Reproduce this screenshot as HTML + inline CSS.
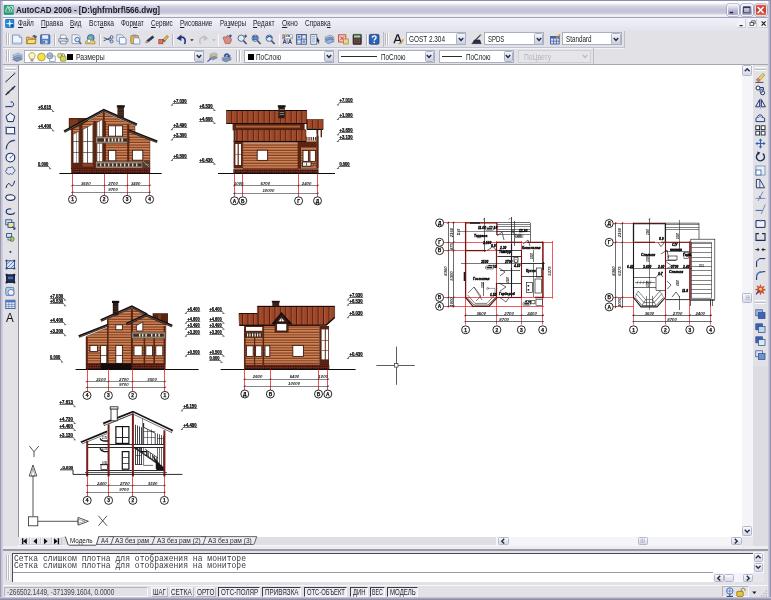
<!DOCTYPE html>
<html lang="ru"><head><meta charset="utf-8"><title>AutoCAD 2006</title>
<style>
html,body{margin:0;padding:0;background:#fff;}
#r{position:relative;width:771px;height:600px;overflow:hidden;will-change:transform;font-family:"Liberation Sans",sans-serif;}
#r div{position:absolute;box-sizing:border-box;}
#r svg{position:absolute;overflow:visible;}
.t{position:absolute;white-space:nowrap;transform-origin:0 50%;font-family:"Liberation Sans",sans-serif;}
.cb{background:#fff;border:1px solid #a9b0c4;}
.dd{background:linear-gradient(#f4f5fa,#c9cde0);border:1px solid #aab0c8;border-radius:1.5px;}
.sb{background:linear-gradient(#fafafd,#d6d8e6);border:1px solid #b4b8cc;border-radius:1.5px;}
#bg{position:absolute;left:0;top:0;width:771px;height:600px;background:#e0e0e5;}
</style></head><body><div id="bg"></div><div id="r">
<div style="left:0px;top:0px;width:771px;height:18px;background:linear-gradient(#8e8eac 0,#8e8eac 0.8px,#fdfdff 1.2px,#fbfbfe 3px,#d4d4e4 6px,#c3c3d8 10px,#c6c6da 13px,#ececf4 15px,#fbfbfe 16.4px,#a2a2ba 17px,#a2a2ba 18px);"></div>
<div style="left:0px;top:18px;width:771px;height:12.5px;background:linear-gradient(#f1f1f7,#e3e3ed);"></div>
<div style="left:0px;top:30.5px;width:771px;height:34px;background:#e1e1e6;"></div>
<div style="left:0px;top:63.6px;width:771px;height:1.2px;background:#a7a7b2;"></div>
<div style="left:0px;top:1px;width:3px;height:599px;background:linear-gradient(90deg,#9a9ab4 0,#9a9ab4 0.9px,#c2c2d6 1.3px,#d2d2e0 3px);"></div>
<div style="left:768px;top:1px;width:3px;height:599px;background:linear-gradient(90deg,#d2d2e0 0,#b4b4cc 1.6px,#8f8fa9 2.2px,#8f8fa9 3px);"></div>
<div style="left:0px;top:597.2px;width:771px;height:2.8px;background:linear-gradient(#d0d0de 0,#b4b4cc 1.2px,#8c8ca6 2px,#8c8ca6 3px);"></div>
<svg style="left:4px;top:4.6px" width="9.6" height="9.6" viewBox="0 0 10 10"><rect width="10" height="10" fill="#2f9e78"/><path d="M1 7.5h8M1.5 6.5L4 1.2L6 6.5M5 1.5l3.5 5M6.5 1.5h2.3v3" stroke="#d9f5e8" stroke-width="0.9" fill="none"/><rect x="0" y="7.8" width="10" height="2.2" fill="#27906c"/></svg>
<span class="t" style="left:16.2px;top:5.03px;font-size:9.3px;line-height:10.70px;color:#1a1a24;font-weight:bold;transform:scaleX(0.8629);">AutoCAD 2006 - [D:\ghfrnbrf\566.dwg]</span>
<div style="left:727.4px;top:3.6px;width:11.8px;height:12px;background:linear-gradient(#f2f2fa,#b9b9d2 55%,#a6a6c6);border:0.8px solid #f4f4fb;border-radius:2px;box-shadow:0 0 0 0.5px #8d8db0;"></div>
<div style="left:741.3px;top:3.6px;width:11.8px;height:12px;background:linear-gradient(#f2f2fa,#b9b9d2 55%,#a6a6c6);border:0.8px solid #f4f4fb;border-radius:2px;box-shadow:0 0 0 0.5px #8d8db0;"></div>
<div style="left:755.2px;top:3.6px;width:11.8px;height:12px;background:linear-gradient(#d9594b,#c8392d 55%,#d86a5c);border:0.8px solid #f6d9d6;border-radius:2px;box-shadow:0 0 0 0.5px #8d8db0;"></div>
<svg style="left:727.4px;top:3.6px" width="40" height="12" viewBox="0 0 40 12"><rect x="2.6" y="7.8" width="3.6" height="1.5" fill="#202848"/><rect x="16.6" y="3" width="6.4" height="5.8" fill="none" stroke="#303858" stroke-width="0.9"/><rect x="16.2" y="2.6" width="7.2" height="1.5" fill="#303858"/><path d="M30.6 3l6 6M36.6 3l-6 6" stroke="#fff" stroke-width="1.6"/></svg>
<svg style="left:5.4px;top:19.4px" width="9.4" height="9" viewBox="0 0 10 10"><rect width="10" height="10" rx="1.6" fill="#1f6fb4"/><rect x="0.6" y="0.6" width="8.8" height="8.8" rx="1.2" fill="#2a86cf"/><path d="M5 1.2v7.6M1.2 5h7.6" stroke="#bfe9ff" stroke-width="1.1"/><circle cx="5" cy="5" r="1.5" fill="#eaffff"/><rect x="6.5" y="6.3" width="2.3" height="2.3" fill="#0d4a86"/></svg>
<span class="t" style="left:18.2px;top:19.01px;font-size:8.4px;line-height:9.66px;color:#24242e;transform:scaleX(0.7651);"><u>Ф</u>айл</span>
<span class="t" style="left:40.9px;top:19.01px;font-size:8.4px;line-height:9.66px;color:#24242e;transform:scaleX(0.7789);"><u>П</u>равка</span>
<span class="t" style="left:70px;top:19.01px;font-size:8.4px;line-height:9.66px;color:#24242e;transform:scaleX(0.7436);"><u>В</u>ид</span>
<span class="t" style="left:88.7px;top:19.01px;font-size:8.4px;line-height:9.66px;color:#24242e;transform:scaleX(0.8008);">Вст<u>а</u>вка</span>
<span class="t" style="left:121px;top:19.01px;font-size:8.4px;line-height:9.66px;color:#24242e;transform:scaleX(0.7642);">Фор<u>м</u>ат</span>
<span class="t" style="left:151px;top:19.01px;font-size:8.4px;line-height:9.66px;color:#24242e;transform:scaleX(0.7579);"><u>С</u>ервис</span>
<span class="t" style="left:179.8px;top:19.01px;font-size:8.4px;line-height:9.66px;color:#24242e;transform:scaleX(0.7683);"><u>Р</u>исование</span>
<span class="t" style="left:219.7px;top:19.01px;font-size:8.4px;line-height:9.66px;color:#24242e;transform:scaleX(0.7506);">Ра<u>з</u>меры</span>
<span class="t" style="left:252.9px;top:19.01px;font-size:8.4px;line-height:9.66px;color:#24242e;transform:scaleX(0.8064);"><u>Р</u>едакт</span>
<span class="t" style="left:282.3px;top:19.01px;font-size:8.4px;line-height:9.66px;color:#24242e;transform:scaleX(0.8044);"><u>О</u>кно</span>
<span class="t" style="left:305.4px;top:19.01px;font-size:8.4px;line-height:9.66px;color:#24242e;transform:scaleX(0.7769);">Справк<u>а</u></span>
<div style="left:737px;top:18.6px;width:9px;height:9px;background:#f3f3f7;border-right:0.6px solid #d0d0dc;border-bottom:0.6px solid #d0d0dc;"></div>
<div style="left:748px;top:18.6px;width:9px;height:9px;background:#f3f3f7;border-right:0.6px solid #d0d0dc;border-bottom:0.6px solid #d0d0dc;"></div>
<div style="left:759px;top:18.6px;width:9px;height:9px;background:#f3f3f7;border-right:0.6px solid #d0d0dc;border-bottom:0.6px solid #d0d0dc;"></div>
<svg style="left:737px;top:18.6px" width="32" height="9" viewBox="0 0 32 9"><rect x="2.6" y="6" width="3" height="1.2" fill="#222"/><rect x="13" y="3.4" width="3.6" height="3" fill="none" stroke="#444" stroke-width="0.8"/><path d="M14.6 3.2v-1.4h3.6v3h-1.4" fill="none" stroke="#444" stroke-width="0.8"/><path d="M24.6 2.4l4 4.2M28.6 2.4l-4 4.2" stroke="#222" stroke-width="1.2"/></svg>
<div style="left:3px;top:46.6px;width:621px;height:0.9px;background:#c3c3cf;"></div>
<div style="left:3px;top:47.5px;width:621px;height:0.8px;background:#f4f4f8;"></div>
<div style="left:6.2px;top:33px;width:0.9px;height:12.4px;background:#b9b9c6;"></div>
<div style="left:7.1000000000000005px;top:33px;width:0.7px;height:12.4px;background:#fbfbfd;"></div>
<div style="left:8.4px;top:33px;width:0.9px;height:12.4px;background:#b9b9c6;"></div>
<div style="left:9.3px;top:33px;width:0.7px;height:12.4px;background:#fbfbfd;"></div>
<div style="left:385.2px;top:33px;width:0.9px;height:12.4px;background:#b9b9c6;"></div>
<div style="left:386.09999999999997px;top:33px;width:0.7px;height:12.4px;background:#fbfbfd;"></div>
<div style="left:387.4px;top:33px;width:0.9px;height:12.4px;background:#b9b9c6;"></div>
<div style="left:388.3px;top:33px;width:0.7px;height:12.4px;background:#fbfbfd;"></div>
<div style="left:6.2px;top:50px;width:0.9px;height:12.4px;background:#b9b9c6;"></div>
<div style="left:7.1000000000000005px;top:50px;width:0.7px;height:12.4px;background:#fbfbfd;"></div>
<div style="left:8.4px;top:50px;width:0.9px;height:12.4px;background:#b9b9c6;"></div>
<div style="left:9.3px;top:50px;width:0.7px;height:12.4px;background:#fbfbfd;"></div>
<div style="left:236.4px;top:50px;width:0.9px;height:12.4px;background:#b9b9c6;"></div>
<div style="left:237.3px;top:50px;width:0.7px;height:12.4px;background:#fbfbfd;"></div>
<div style="left:238.6px;top:50px;width:0.9px;height:12.4px;background:#b9b9c6;"></div>
<div style="left:239.5px;top:50px;width:0.7px;height:12.4px;background:#fbfbfd;"></div>
<div style="left:383.2px;top:32px;width:1px;height:14.6px;background:#bdbdca;"></div>
<div style="left:624px;top:31px;width:1px;height:16.6px;background:#bdbdca;"></div>
<div style="left:592.6px;top:48px;width:1px;height:15.6px;background:#bdbdca;"></div>
<div style="left:54px;top:33.5px;width:0.8px;height:12px;background:#b6b6c4;"></div>
<div style="left:54.8px;top:33.5px;width:0.7px;height:12px;background:#f8f8fb;"></div>
<div style="left:99px;top:33.5px;width:0.8px;height:12px;background:#b6b6c4;"></div>
<div style="left:99.8px;top:33.5px;width:0.7px;height:12px;background:#f8f8fb;"></div>
<div style="left:171.8px;top:33.5px;width:0.8px;height:12px;background:#b6b6c4;"></div>
<div style="left:172.60000000000002px;top:33.5px;width:0.7px;height:12px;background:#f8f8fb;"></div>
<div style="left:217.5px;top:33.5px;width:0.8px;height:12px;background:#b6b6c4;"></div>
<div style="left:218.3px;top:33.5px;width:0.7px;height:12px;background:#f8f8fb;"></div>
<div style="left:278.5px;top:33.5px;width:0.8px;height:12px;background:#b6b6c4;"></div>
<div style="left:279.3px;top:33.5px;width:0.7px;height:12px;background:#f8f8fb;"></div>
<div style="left:366px;top:33.5px;width:0.8px;height:12px;background:#b6b6c4;"></div>
<div style="left:366.8px;top:33.5px;width:0.7px;height:12px;background:#f8f8fb;"></div>
<svg style="left:12px;top:34.2px" width="11" height="11" viewBox="0 0 11 11"><path d="M0.6 1h6.6l2.6 2.4v6.4h-9.2z" fill="#eef4fc" stroke="#6f8fc0" stroke-width="0.9"/><path d="M7.2 1v2.4h2.6" fill="#cfdcf0" stroke="#6f8fc0" stroke-width="0.7"/><path d="M1.6 8.8h7.4" stroke="#b9cbe8" stroke-width="1.2"/></svg>
<svg style="left:26px;top:34.2px" width="11" height="11" viewBox="0 0 11 11"><path d="M0.6 3.2h3l1 1h5v5.4h-9z" fill="#e8c050" stroke="#9a7420" stroke-width="0.8"/><path d="M2.2 5.4h8l-1.6 4.2h-8z" fill="#f6dc7c" stroke="#9a7420" stroke-width="0.7"/><path d="M6.2 2.6c1.2-1.8 3-1.6 3.6-0.2l0.8-0.4-0.6 2-1.8-0.8 0.8-0.3" fill="#3a4a6a" stroke="#3a4a6a" stroke-width="0.5"/></svg>
<svg style="left:39.8px;top:34.2px" width="11" height="11" viewBox="0 0 11 11"><rect x="0.6" y="0.8" width="9.2" height="9" rx="0.6" fill="#4f7fc8" stroke="#2b4f96" stroke-width="0.8"/><rect x="2.2" y="1.2" width="6" height="3.6" fill="#e9eff9"/><rect x="2.8" y="6.4" width="4.8" height="3.2" fill="#c8d4ea"/><rect x="3.4" y="7" width="1.4" height="2.2" fill="#2b4f96"/></svg>
<svg style="left:57.6px;top:34.2px" width="11" height="11" viewBox="0 0 11 11"><path d="M2.6 4.4v-3.4h4l1.6 1.4v2" fill="#fff" stroke="#7486a8" stroke-width="0.8"/><rect x="0.8" y="4.4" width="9.2" height="3.6" rx="0.8" fill="#d4d8e4" stroke="#66708c" stroke-width="0.8"/><path d="M2.6 7.2h5.6v2.6h-5.6z" fill="#f6f6fa" stroke="#66708c" stroke-width="0.7"/><circle cx="8.4" cy="5.6" r="0.6" fill="#3a8a3a"/></svg>
<svg style="left:71px;top:34.2px" width="11" height="11" viewBox="0 0 11 11"><path d="M1 0.8h6l2 1.8v7h-8z" fill="#f4f7fc" stroke="#7890b8" stroke-width="0.8"/><circle cx="6.2" cy="5.6" r="2.3" fill="#cfe4f6" stroke="#47608c" stroke-width="0.9"/><path d="M7.8 7.4l2.4 2.6" stroke="#47608c" stroke-width="1.4"/></svg>
<svg style="left:85px;top:34.2px" width="11" height="11" viewBox="0 0 11 11"><circle cx="5.8" cy="4" r="3.4" fill="#5aa0dc" stroke="#2a5c9c" stroke-width="0.8"/><path d="M3.6 3c1-1.4 3-1 3.6 0.2c-0.4 1.4-1.6 1-2 2.4c-1-0.4-1.8-1.4-1.6-2.6" fill="#78c86c"/><path d="M0.6 7.4c2.4-1.8 6.6-1.8 9.4 0v2.4h-9.4z" fill="#f0d26c" stroke="#9c7c24" stroke-width="0.7"/><rect x="2.4" y="5.6" width="3.2" height="3" fill="#fff" stroke="#8090b0" stroke-width="0.6"/></svg>
<svg style="left:103px;top:34.2px" width="11" height="11" viewBox="0 0 11 11"><path d="M0.6 3.6l7.6 3M0.6 6.8l7.4-3.2" stroke="#4a5a7c" stroke-width="1"/><circle cx="8.6" cy="3.2" r="1.5" fill="none" stroke="#3c5a9c" stroke-width="0.9"/><circle cx="8.6" cy="7.4" r="1.5" fill="none" stroke="#3c5a9c" stroke-width="0.9"/></svg>
<svg style="left:116px;top:34.2px" width="11" height="11" viewBox="0 0 11 11"><path d="M0.8 0.8h5l1.6 1.4v5h-6.6z" fill="#eef3fb" stroke="#6f8fc0" stroke-width="0.8"/><path d="M3.4 3.4h5l1.6 1.4v5.2h-6.6z" fill="#f8fafe" stroke="#5f7fb4" stroke-width="0.8"/></svg>
<svg style="left:130.4px;top:34.2px" width="11" height="11" viewBox="0 0 11 11"><rect x="0.8" y="1.6" width="7.6" height="8" rx="0.8" fill="#e8b84c" stroke="#9a7020" stroke-width="0.8"/><rect x="2.8" y="0.6" width="3.6" height="2" fill="#8a94aa"/><path d="M3.6 3.8h4.4l1.8 1.6v4.6h-6.2z" fill="#f4f8fe" stroke="#6f8fc0" stroke-width="0.8"/></svg>
<svg style="left:145px;top:34.2px" width="11" height="11" viewBox="0 0 11 11"><path d="M0.8 8.8l1-2.4l5.8-4.6l1.4 1.6l-5.8 4.6z" fill="#2c3450" stroke="#1c2238" stroke-width="0.5"/><path d="M0.8 8.8l1-2.4l1.4 1.6z" fill="#e8c88c"/></svg>
<svg style="left:157.6px;top:34.2px" width="11" height="11" viewBox="0 0 11 11"><rect x="0.8" y="5.6" width="4" height="4.2" fill="#e46c5c" stroke="#a43c30" stroke-width="0.7"/><path d="M4 7l4.8-5.6l1.6 1.2l-4.4 5.8z" fill="#f0c040" stroke="#8a6818" stroke-width="0.7"/><path d="M4.6 5.6l2.4 1.8" stroke="#3858a8" stroke-width="1.3"/></svg>
<svg style="left:175.6px;top:34.2px" width="11" height="11" viewBox="0 0 11 11"><path d="M8.600 10c1.600-3.600 0.600-7.400-4.400-6.800" fill="none" stroke="#1c3480" stroke-width="1.700"/><path d="M0.600 4.600l4.800-4v6.400z" fill="#1c3480"/></svg>
<svg style="left:190.4px;top:38.6px" width="4" height="3"><path d="M0.200 0.200h3.400l-1.700 2z" fill="#222"/></svg>
<svg style="left:197.6px;top:34.2px" width="11" height="11" viewBox="0 0 11 11"><path d="M2.400 10c-1.600-3.600-0.600-7.400 4.400-6.800" fill="none" stroke="#c0c2ce" stroke-width="1.700"/><path d="M10.400 4.600l-4.800-4v6.400z" fill="#c0c2ce"/></svg>
<svg style="left:212.4px;top:38.6px" width="4" height="3"><path d="M0.200 0.200h3.400l-1.700 2z" fill="#b4b4c0"/></svg>
<svg style="left:221.6px;top:34.2px" width="11" height="11" viewBox="0 0 11 11"><path d="M1 3.6c1.4-1.6 2.4-0.8 3.2 0.2l0.6-2c1-0.6 1.8 0 2 1c1-0.2 1.6 0.4 1.6 1.4c1 0.2 1.4 1 1 2.2l-1.4 3.2h-4.6z" fill="#d88c84" stroke="#a0544c" stroke-width="0.7"/><path d="M8.4 0.4v3M6.9 1.9h3" stroke="#2c54b0" stroke-width="1.1"/></svg>
<svg style="left:236.6px;top:34.2px" width="11" height="11" viewBox="0 0 11 11"><circle cx="4.2" cy="4.2" r="3.2" fill="#dcecf8" stroke="#5a6e94" stroke-width="1"/><path d="M6.4 6.6l3.2 3.4" stroke="#4a5470" stroke-width="1.6"/><path d="M8.6 0.6v3M7.1 2.1h3" stroke="#3a3a4a" stroke-width="0.9"/></svg>
<svg style="left:250.6px;top:34.2px" width="11" height="11" viewBox="0 0 11 11"><circle cx="4.2" cy="4.2" r="3.2" fill="#dcecf8" stroke="#5a6e94" stroke-width="1"/><path d="M6.4 6.6l3.2 3.4" stroke="#4a5470" stroke-width="1.6"/><rect x="2.2" y="2.4" width="4" height="3.4" fill="#5a8ad0" stroke="#2c4c90" stroke-width="0.6"/></svg>
<svg style="left:264.6px;top:34.2px" width="11" height="11" viewBox="0 0 11 11"><circle cx="4.2" cy="4.2" r="3.2" fill="#dcecf8" stroke="#5a6e94" stroke-width="1"/><path d="M6.4 6.6l3.2 3.4" stroke="#4a5470" stroke-width="1.6"/><path d="M1.8 4.2c1-2.4 4-2.4 5 0" fill="none" stroke="#2c54b0" stroke-width="1.1"/></svg>
<svg style="left:282px;top:34.2px" width="11" height="11" viewBox="0 0 11 11"><rect x="0.6" y="0.8" width="9.6" height="4" fill="#fff" stroke="#7080a0" stroke-width="0.6"/><rect x="1.2" y="1.2" width="2" height="1.6" fill="#e03030"/><rect x="3.6" y="1.2" width="2" height="1.6" fill="#30a030"/><rect x="6" y="1.2" width="2" height="1.6" fill="#3050e0"/><rect x="8" y="2.8" width="2" height="1.6" fill="#e0c020"/><rect x="1.2" y="3" width="2" height="1.4" fill="#c030c0"/><path d="M1 9.8l1.6-4.4l1.6 4.4M6.4 9.8l1.6-4.4l1.6 4.4M1.6 8.4h2M7 8.4h2" stroke="#283a6c" stroke-width="0.9" fill="none"/><path d="M5.2 4.8v5" stroke="#7080a0" stroke-width="0.8"/></svg>
<svg style="left:296px;top:34.2px" width="11" height="11" viewBox="0 0 11 11"><rect x="0.6" y="0.6" width="9.8" height="9.6" fill="#dfe8f6" stroke="#3c5488" stroke-width="0.9"/><path d="M5.4 0.6v9.6M0.6 5.2h9.8" stroke="#3c5488" stroke-width="0.8"/><rect x="1.6" y="1.6" width="2.6" height="2.4" fill="#6a8ac8"/><rect x="6.6" y="1.6" width="2.6" height="2.4" fill="#fff" stroke="#6a8ac8" stroke-width="0.5"/><rect x="1.6" y="6.4" width="2.6" height="2.4" fill="#fff" stroke="#6a8ac8" stroke-width="0.5"/><rect x="6.6" y="6.4" width="2.6" height="2.4" fill="#6a8ac8"/></svg>
<svg style="left:310px;top:34.2px" width="11" height="11" viewBox="0 0 11 11"><rect x="0.8" y="0.6" width="6" height="9.6" fill="#f2f5fb" stroke="#4a648c" stroke-width="0.8"/><path d="M2 2.4h3.4M2 4.2h3.4M2 6h3.4M2 7.8h3.4" stroke="#7088b4" stroke-width="0.7"/><path d="M7 3l2.6 4l-1 0.2l0.8 2l-0.8 0.4l-0.8-2l-0.8 0.6z" fill="#222c44"/></svg>
<svg style="left:324px;top:34.2px" width="11" height="11" viewBox="0 0 11 11"><path d="M0.8 3.2l6-2.2l3.4 2.4l-6 2.4z" fill="#b4c8e4" stroke="#6f86ac" stroke-width="0.6"/><path d="M0.8 5.2l6-2.2l3.4 2.4l-6 2.4z" fill="#7c9ccc" stroke="#4f6a98" stroke-width="0.6"/><path d="M0.8 7.2l6-2.2l3.4 2.4l-6 2.4z" fill="#9cb8dc" stroke="#4f6a98" stroke-width="0.6"/></svg>
<svg style="left:338px;top:34.2px" width="11" height="11" viewBox="0 0 11 11"><rect x="0.6" y="0.8" width="7.2" height="7.2" fill="#f4d0cc" stroke="#c04438" stroke-width="0.9"/><path d="M2 2.4l4 4M6 2.4l-4 4" stroke="#c83c30" stroke-width="1"/><rect x="5.4" y="5" width="4.8" height="5" fill="#f0d48c" stroke="#a08030" stroke-width="0.7"/></svg>
<svg style="left:351.6px;top:34.2px" width="11" height="11" viewBox="0 0 11 11"><rect x="1" y="0.4" width="8.4" height="10" rx="0.6" fill="#3a3a3e" stroke="#1c1c20" stroke-width="0.6"/><rect x="2" y="1.4" width="6.4" height="2.2" fill="#9cd48c"/><path d="M2 5.2h6.4M2 6.8h6.4M2 8.4h6.4" stroke="#c84840" stroke-width="0.9" stroke-dasharray="1.4 0.9"/></svg>
<svg style="left:369.4px;top:34.2px" width="11" height="11" viewBox="0 0 11 11"><rect x="0.4" y="0.4" width="9.6" height="9.8" rx="1.2" fill="#2c64b8" stroke="#163c80" stroke-width="0.8"/><path d="M3.4 3.8c0-2.6 3.8-2.4 3.6-0.2c-0.2 1.4-1.8 1.4-1.8 3" stroke="#fff" stroke-width="1.4" fill="none"/><circle cx="5.2" cy="8.4" r="0.8" fill="#fff"/></svg>
<svg style="left:392.8px;top:34.2px" width="11" height="11" viewBox="0 0 11 11"><path d="M1 9.2l3.2-8.2h1l3 8.2M2.2 6.4h4.8" stroke="#181c2c" stroke-width="1.3" fill="none"/><path d="M5.4 9.6c2-0.2 3.6-1.6 4.8-4.4" stroke="#c89030" stroke-width="1.4" fill="none"/></svg>
<div class="cb" style="left:405.8px;top:32.2px;width:60.6px;height:13.2px;"></div>
<div class="dd" style="left:456.0px;top:33.0px;width:9.6px;height:11.6px;"></div>
<svg style="left:457.80px;top:36.60px" width="6" height="5" viewBox="0 0 6 5"><path d="M0.8 1l2.2 2.4l2.2-2.4" fill="none" stroke="#262c40" stroke-width="1.5"/></svg>
<span class="t" style="left:409px;top:35.03px;font-size:8.6px;line-height:9.89px;color:#1c1c24;transform:scaleX(0.7481);">GOST 2.304</span>
<svg style="left:471px;top:34.2px" width="11" height="11" viewBox="0 0 11 11"><path d="M0.6 9.6h10M1.4 9.4l2-3.4h5.4l1 3.4" fill="#2c3040" stroke="#1c2030" stroke-width="0.7"/><path d="M4.4 6.2l5.4-5.6" stroke="#2c3040" stroke-width="1.1"/><path d="M8.6 0.8l1.6 1.2" stroke="#c89030" stroke-width="1.2"/></svg>
<div class="cb" style="left:484.2px;top:32.2px;width:60px;height:13.2px;"></div>
<div class="dd" style="left:533.8000000000001px;top:33.0px;width:9.6px;height:11.6px;"></div>
<svg style="left:535.60px;top:36.60px" width="6" height="5" viewBox="0 0 6 5"><path d="M0.8 1l2.2 2.4l2.2-2.4" fill="none" stroke="#262c40" stroke-width="1.5"/></svg>
<span class="t" style="left:487.6px;top:35.03px;font-size:8.6px;line-height:9.89px;color:#1c1c24;transform:scaleX(0.7002);">SPDS</span>
<svg style="left:549.6px;top:34.2px" width="11" height="11" viewBox="0 0 11 11"><rect x="0.6" y="2.4" width="8.6" height="7.6" fill="#dfe8f8" stroke="#2c4c90" stroke-width="0.8"/><rect x="0.6" y="2.4" width="8.6" height="2.2" fill="#3c64b4"/><path d="M0.6 7.2h8.6M3.6 4.6v5.4M6.4 4.6v5.4" stroke="#2c4c90" stroke-width="0.7"/><path d="M5.6 5l4.4-4.6" stroke="#c89030" stroke-width="1.3"/></svg>
<div class="cb" style="left:562.2px;top:32.2px;width:59.4px;height:13.2px;"></div>
<div class="dd" style="left:611.2px;top:33.0px;width:9.6px;height:11.6px;"></div>
<svg style="left:613.00px;top:36.60px" width="6" height="5" viewBox="0 0 6 5"><path d="M0.8 1l2.2 2.4l2.2-2.4" fill="none" stroke="#262c40" stroke-width="1.5"/></svg>
<span class="t" style="left:565.6px;top:35.03px;font-size:8.6px;line-height:9.89px;color:#1c1c24;transform:scaleX(0.7335);">Standard</span>
<svg style="left:11.8px;top:52px" width="11" height="11" viewBox="0 0 11 11"><path d="M0.6 3.4l5.4-2.4l4.4 2l-5.4 2.6z" fill="#c4d0e4" stroke="#7c8cac" stroke-width="0.6"/><path d="M0.6 5.4l5.4-2.4l4.4 2l-5.4 2.6z" fill="#9cb0d0" stroke="#6878a0" stroke-width="0.6"/><path d="M0.6 7.4l5.4-2.4l4.4 2l-5.4 2.6z" fill="#7c94bc" stroke="#586890" stroke-width="0.6"/></svg>
<div class="cb" style="left:24px;top:50px;width:180.4px;height:13.2px;"></div>
<div class="dd" style="left:194.0px;top:50.8px;width:9.6px;height:11.6px;"></div>
<svg style="left:195.80px;top:54.40px" width="6" height="5" viewBox="0 0 6 5"><path d="M0.8 1l2.2 2.4l2.2-2.4" fill="none" stroke="#262c40" stroke-width="1.5"/></svg>
<svg style="left:27.6px;top:52px" width="8" height="10" viewBox="0 0 8 10"><path d="M4 0.6c2.2 0 3.2 1.6 3.2 3c0 1.4-1.2 2-1.4 3.4h-3.6c-0.2-1.4-1.4-2-1.4-3.4c0-1.4 1-3 3.2-3z" fill="#fbf6b8" stroke="#8c8450" stroke-width="0.7"/><rect x="2.6" y="7.2" width="2.8" height="2.2" fill="#8c93a8"/></svg>
<svg style="left:36.6px;top:52px" width="9" height="10" viewBox="0 0 9 10"><circle cx="4.4" cy="5" r="3.9" fill="#f2e04c" stroke="#a4942c" stroke-width="0.8"/></svg>
<svg style="left:46px;top:51.6px" width="10" height="10" viewBox="0 0 10 10"><rect x="3.6" y="4" width="5.6" height="5.4" fill="#fff" stroke="#7c8cb0" stroke-width="0.7"/><circle cx="3.8" cy="3.8" r="3.1" fill="#9cacbc" stroke="#6c7c94" stroke-width="0.7"/><path d="M1.8 2.6c1.2-1 2.6-1 3.8 0M1.8 5c1.2 1 2.6 1 3.8 0" stroke="#d8e4ec" stroke-width="0.6" fill="none"/></svg>
<svg style="left:56.8px;top:51.6px" width="10" height="10" viewBox="0 0 10 10"><circle cx="3" cy="3.6" r="2.4" fill="#e8e06c" stroke="#7c8430" stroke-width="0.7"/><rect x="3.4" y="4.2" width="5.6" height="5" rx="0.8" fill="#d8d44c" stroke="#7c8430" stroke-width="0.7"/><path d="M4.6 4.2v-1.2c0-1.8 3-1.8 3 0v1.2" fill="none" stroke="#6c7494" stroke-width="0.8"/></svg>
<div style="left:67.2px;top:53.6px;width:6.2px;height:6.8px;background:#000;"></div>
<span class="t" style="left:76.2px;top:53.03px;font-size:8.6px;line-height:9.89px;color:#1c1c24;transform:scaleX(0.8003);">Размеры</span>
<svg style="left:207px;top:52px" width="11" height="11" viewBox="0 0 11 11"><path d="M2.6 2.4l4.4-1.8l3.4 1.6l-4.4 2z" fill="#c4d0e4" stroke="#7c8cac" stroke-width="0.5"/><path d="M2.6 4.2l4.4-1.8l3.4 1.6l-4.4 2z" fill="#e8d060" stroke="#a48c2c" stroke-width="0.5"/><path d="M2.6 6l4.4-1.8l3.4 1.6l-4.4 2z" fill="#7c94bc" stroke="#586890" stroke-width="0.5"/><path d="M0.4 9.6l3.2-2.8" stroke="#2c54b0" stroke-width="1.1"/><path d="M2.4 6.4l1.6 0l0 1.6z" fill="#2c54b0"/></svg>
<svg style="left:221px;top:52px" width="11" height="11" viewBox="0 0 11 11"><path d="M0.8 6.2l5.4-2.2l4.2 1.8l-5.4 2.4z" fill="#9cb0d0" stroke="#586890" stroke-width="0.5"/><path d="M0.8 8l5.4-2.2l4.2 1.8l-5.4 2.4z" fill="#7c94bc" stroke="#586890" stroke-width="0.5"/><path d="M3 4.4c0-3.6 5-4 5.4-0.6l1-0.2l-1.4 2l-1.6-1.6l1 0c-0.4-2-3-1.6-3 0.6z" fill="#24448c" stroke="#24448c" stroke-width="0.4"/></svg>
<div class="cb" style="left:244px;top:50px;width:90.4px;height:13.2px;"></div>
<div class="dd" style="left:323.99999999999994px;top:50.8px;width:9.6px;height:11.6px;"></div>
<svg style="left:325.80px;top:54.40px" width="6" height="5" viewBox="0 0 6 5"><path d="M0.8 1l2.2 2.4l2.2-2.4" fill="none" stroke="#262c40" stroke-width="1.5"/></svg>
<div style="left:247.8px;top:53.6px;width:5.8px;height:6.2px;background:#000;"></div>
<span class="t" style="left:256.2px;top:53.03px;font-size:8.6px;line-height:9.89px;color:#1c1c24;transform:scaleX(0.7458);">ПоСлою</span>
<div class="cb" style="left:338px;top:50px;width:97px;height:13.2px;"></div>
<div class="dd" style="left:424.59999999999997px;top:50.8px;width:9.6px;height:11.6px;"></div>
<svg style="left:426.40px;top:54.40px" width="6" height="5" viewBox="0 0 6 5"><path d="M0.8 1l2.2 2.4l2.2-2.4" fill="none" stroke="#262c40" stroke-width="1.5"/></svg>
<div style="left:341.4px;top:56.2px;width:35.6px;height:0.9px;background:#2a2a30;"></div>
<span class="t" style="left:381px;top:53.03px;font-size:8.6px;line-height:9.89px;color:#1c1c24;transform:scaleX(0.7339);">ПоСлою</span>
<div class="cb" style="left:439px;top:50px;width:75px;height:13.2px;"></div>
<div class="dd" style="left:503.59999999999997px;top:50.8px;width:9.6px;height:11.6px;"></div>
<svg style="left:505.40px;top:54.40px" width="6" height="5" viewBox="0 0 6 5"><path d="M0.8 1l2.2 2.4l2.2-2.4" fill="none" stroke="#262c40" stroke-width="1.5"/></svg>
<div style="left:442.2px;top:56.2px;width:20px;height:0.9px;background:#2a2a30;"></div>
<span class="t" style="left:466px;top:53.03px;font-size:8.6px;line-height:9.89px;color:#1c1c24;transform:scaleX(0.7339);">ПоСлою</span>
<div class="cb" style="left:518.4px;top:50px;width:72.4px;height:13.2px;background:#e6e6ea;border-color:#cfcfd8;"></div>
<svg style="left:582.20px;top:54.40px" width="6" height="5" viewBox="0 0 6 5"><path d="M0.8 1l2.2 2.4l2.2-2.4" fill="none" stroke="#bcbcc8" stroke-width="1.5"/></svg>
<span class="t" style="left:524px;top:53.03px;font-size:8.6px;line-height:9.89px;color:#b4b4c0;transform:scaleX(0.7797);">ПоЦвету</span>
<div style="left:18.4px;top:64.8px;width:723.2px;height:472px;background:#fff;"></div>
<div style="left:17.6px;top:64.6px;width:0.9px;height:481px;background:#8e8e9c;"></div>
<div style="left:3px;top:64.8px;width:14.6px;height:484px;background:#e1e1e6;"></div>
<div style="left:5px;top:66.6px;width:11px;height:0.8px;background:#bcbcc8;"></div>
<div style="left:5px;top:67.4px;width:11px;height:0.7px;background:#fbfbfd;"></div>
<div style="left:5px;top:68.8px;width:11px;height:0.8px;background:#bcbcc8;"></div>
<div style="left:5px;top:69.6px;width:11px;height:0.7px;background:#fbfbfd;"></div>
<svg style="left:4.6px;top:71.6px" width="11" height="11" viewBox="0 0 11 11"><path d="M1 9.6l8.6-8" stroke="#1c2030" stroke-width="1"/><rect x="0.4" y="8.8" width="1.6" height="1.6" fill="#4a7cc8"/><rect x="8.8" y="0.6" width="1.6" height="1.6" fill="#4a7cc8"/></svg>
<svg style="left:4.6px;top:85.0px" width="11" height="11" viewBox="0 0 11 11"><path d="M0.6 10l9.6-9" stroke="#1c2030" stroke-width="1.1"/><rect x="2.4" y="6.6" width="1.8" height="1.8" fill="#1c2c5c"/><rect x="6.8" y="2.6" width="1.8" height="1.8" fill="#1c2c5c"/></svg>
<svg style="left:4.6px;top:98.39999999999999px" width="11" height="11" viewBox="0 0 11 11"><path d="M1 8.6h5.4c3 0 3-4.6 0-4.6" stroke="#1c2c5c" stroke-width="1" fill="none"/><rect x="0.2" y="7.8" width="1.6" height="1.6" fill="#4a7cc8"/><rect x="5.6" y="3.2" width="1.6" height="1.6" fill="#4a7cc8"/><rect x="5.8" y="7.8" width="1.6" height="1.6" fill="#4a7cc8"/></svg>
<svg style="left:4.6px;top:111.8px" width="11" height="11" viewBox="0 0 11 11"><path d="M5.4 1l4.4 3.2l-1.6 5.4h-5.6l-1.6-5.4z" fill="#eef2fa" stroke="#1c2c5c" stroke-width="1"/></svg>
<svg style="left:4.6px;top:125.19999999999999px" width="11" height="11" viewBox="0 0 11 11"><rect x="1.2" y="2.4" width="8.4" height="6.4" fill="#f2f5fb" stroke="#1c2c5c" stroke-width="1"/><rect x="0.4" y="1.6" width="1.6" height="1.6" fill="#4a7cc8"/><rect x="8.8" y="8" width="1.6" height="1.6" fill="#4a7cc8"/></svg>
<svg style="left:4.6px;top:138.6px" width="11" height="11" viewBox="0 0 11 11"><path d="M1.4 9.8c0-4.6 3-8 8-8.4" stroke="#1c2c5c" stroke-width="1.1" fill="none"/><rect x="0.6" y="8.8" width="1.6" height="1.6" fill="#4a7cc8"/><rect x="8.6" y="0.6" width="1.6" height="1.6" fill="#4a7cc8"/></svg>
<svg style="left:4.6px;top:152.0px" width="11" height="11" viewBox="0 0 11 11"><circle cx="5.4" cy="5.6" r="4.4" fill="#f2f5fb" stroke="#1c2c5c" stroke-width="1.1"/><path d="M5.4 5.6l3-3" stroke="#4a7cc8" stroke-width="0.9"/><circle cx="5.4" cy="5.6" r="0.9" fill="#4a7cc8"/></svg>
<svg style="left:4.6px;top:165.39999999999998px" width="11" height="11" viewBox="0 0 11 11"><path d="M2 8c-2-0.6-1.6-3 0-3.2c-0.6-2 1.6-3.2 3-2c1-1.6 3.8-1 3.6 1c1.8 0.4 1.8 3 0 3.4c0.2 1.8-2 2.6-3.2 1.4c-1 1.2-3 0.8-3.400-0.600z" fill="#dfe6f4" stroke="#3c4c7c" stroke-width="0.9"/></svg>
<svg style="left:4.6px;top:178.8px" width="11" height="11" viewBox="0 0 11 11"><path d="M1 9c1.200-5 3.200-5.400 4.400-3.200s3 1.400 4.200-4" stroke="#1c2c5c" stroke-width="1" fill="none"/></svg>
<svg style="left:4.6px;top:192.2px" width="11" height="11" viewBox="0 0 11 11"><ellipse cx="5.4" cy="5.6" rx="4.6" ry="2.8" fill="#f2f5fb" stroke="#1c2c5c" stroke-width="1.1"/></svg>
<svg style="left:4.6px;top:205.6px" width="11" height="11" viewBox="0 0 11 11"><path d="M9.800 6.400a4.400 2.800 0 1 1 -4.400 -3.600" fill="none" stroke="#1c2c5c" stroke-width="1.100"/><rect x="4.600" y="2" width="1.600" height="1.600" fill="#4a7cc8"/></svg>
<svg style="left:4.6px;top:219.0px" width="11" height="11" viewBox="0 0 11 11"><rect x="0.800" y="0.800" width="6" height="5" fill="#dfe8f8" stroke="#2c4c8c" stroke-width="0.900"/><rect x="3" y="3.400" width="6" height="5" fill="#f0e48c" stroke="#2c4c8c" stroke-width="0.900"/><path d="M7 7.400l3 2.800M10 8.400v1.800h-1.800" stroke="#1c2c5c" stroke-width="0.900" fill="none"/></svg>
<svg style="left:4.6px;top:232.4px" width="11" height="11" viewBox="0 0 11 11"><rect x="1.600" y="1.600" width="5" height="3.600" fill="#dfe8f8" stroke="#2c4c8c" stroke-width="0.900"/><circle cx="6.800" cy="7" r="2.300" fill="#b8d86c" stroke="#3c6c2c" stroke-width="0.800"/><rect x="3" y="5.400" width="3" height="2.600" fill="#f0e48c" stroke="#2c4c8c" stroke-width="0.700"/></svg>
<svg style="left:4.6px;top:245.8px" width="11" height="11" viewBox="0 0 11 11"><rect x="4.600" y="5" width="1.700" height="1.700" fill="#1c2c5c"/></svg>
<svg style="left:4.6px;top:259.2px" width="11" height="11" viewBox="0 0 11 11"><rect x="1.600" y="1.800" width="7.800" height="7.600" fill="#dfe8f8" stroke="#2c4478" stroke-width="0.900"/><path d="M1.600 5.600l4-3.800M1.600 9.400l7.800-7.600M5.400 9.400l4-3.800" stroke="#3c64b4" stroke-width="0.800"/><rect x="0.600" y="0.800" width="1.800" height="1.800" fill="#2c4478"/><rect x="8.400" y="0.800" width="1.800" height="1.800" fill="#2c4478"/><rect x="0.600" y="8.600" width="1.800" height="1.800" fill="#2c4478"/><rect x="8.400" y="8.600" width="1.800" height="1.800" fill="#2c4478"/></svg>
<svg style="left:4.6px;top:272.6px" width="11" height="11" viewBox="0 0 11 11"><rect x="1.600" y="1.800" width="7.800" height="7.600" fill="#1c2c5c" stroke="#10182c" stroke-width="0.900"/><rect x="3" y="3.600" width="5" height="2.600" fill="#4a6cb0"/><rect x="0.600" y="0.800" width="1.800" height="1.800" fill="#10182c"/><rect x="8.400" y="0.800" width="1.800" height="1.800" fill="#10182c"/><rect x="0.600" y="8.600" width="1.800" height="1.800" fill="#10182c"/><rect x="8.400" y="8.600" width="1.800" height="1.800" fill="#10182c"/></svg>
<svg style="left:4.6px;top:286.0px" width="11" height="11" viewBox="0 0 11 11"><rect x="0.800" y="1.400" width="8" height="8" rx="1" fill="#b8d0ec" stroke="#4a6ca8" stroke-width="0.800"/><circle cx="6" cy="6.400" r="3" fill="#eef4fc" stroke="#4a6ca8" stroke-width="0.800"/></svg>
<svg style="left:4.6px;top:299.4px" width="11" height="11" viewBox="0 0 11 11"><rect x="0.800" y="1.200" width="9.200" height="8.400" fill="#eef3fb" stroke="#2c4c90" stroke-width="0.800"/><rect x="0.800" y="1.200" width="9.200" height="2.200" fill="#4a74c4"/><path d="M0.800 5.400h9.200M0.800 7.400h9.200M3.800 3.400v6.200M6.800 3.400v6.200" stroke="#4a6cb0" stroke-width="0.600"/></svg>
<span class="t" style="left:5.6px;top:311.6px;font-size:12.6px;line-height:13px;color:#101018;transform:scaleX(0.92)">A</span>
<div style="left:741.6px;top:64.8px;width:11.2px;height:472px;background:#f5f5f9;"></div>
<div class="sb" style="left:742.2px;top:65.2px;width:10.2px;height:10.6px;"></div>
<div class="sb" style="left:742.2px;top:525.6px;width:10.2px;height:10.6px;"></div>
<svg style="left:744.10px;top:67.20px" width="6.400" height="6.400" viewBox="0 0 6.400 6.400"><path d="M0.800 4.200l2.400-2.400l2.400 2.400" fill="none" stroke="#2c3248" stroke-width="1.500"/></svg>
<svg style="left:744.10px;top:527.80px" width="6.400" height="6.400" viewBox="0 0 6.400 6.400"><path d="M0.800 1.800l2.400 2.400l2.400-2.400" fill="none" stroke="#2c3248" stroke-width="1.500"/></svg>
<div style="left:752.8px;top:64.8px;width:15.2px;height:301px;background:#e1e1e6;"></div>
<div style="left:752.8px;top:365.8px;width:15.2px;height:183px;background:#dcdce2;"></div>
<div style="left:754.6px;top:66.6px;width:11.4px;height:0.8px;background:#bcbcc8;"></div>
<div style="left:754.6px;top:67.4px;width:11.4px;height:0.7px;background:#fbfbfd;"></div>
<div style="left:754.6px;top:68.8px;width:11.4px;height:0.8px;background:#bcbcc8;"></div>
<div style="left:754.6px;top:69.6px;width:11.4px;height:0.7px;background:#fbfbfd;"></div>
<svg style="left:755.2px;top:71.5px" width="11" height="11" viewBox="0 0 11 11"><path d="M1.400 8l6.400-6.600l2 1.600l-5.800 6.600z" fill="#e8d860" stroke="#8c7c2c" stroke-width="0.600"/><path d="M1.400 8l1.800-1.800l1.800 1.800l-1 1.600z" fill="#e87c8c" stroke="#a4445c" stroke-width="0.500"/><path d="M0.400 10.400h8" stroke="#3c3c4c" stroke-width="0.900"/></svg>
<svg style="left:755.2px;top:85.0px" width="11" height="11" viewBox="0 0 11 11"><circle cx="3" cy="3" r="2" fill="#fff" stroke="#1c2c5c" stroke-width="1"/><circle cx="7.600" cy="7.800" r="2" fill="#fff" stroke="#1c2c5c" stroke-width="1"/><path d="M5 2.600h3.400v2.400" stroke="#1c2c5c" stroke-width="1" fill="none"/><circle cx="6.400" cy="6" r="1.600" fill="#8cacdc" stroke="#1c2c5c" stroke-width="0.600"/></svg>
<svg style="left:755.2px;top:98.1px" width="11" height="11" viewBox="0 0 11 11"><path d="M4.600 1.600v7.200h-4zM6.400 1.600v7.200h4z" fill="#dce6f6" stroke="#1c2c5c" stroke-width="0.900"/><path d="M5.500 0.400v10.400" stroke="#4a7cc8" stroke-width="0.700" stroke-dasharray="1.400 0.800"/></svg>
<svg style="left:755.2px;top:111.5px" width="11" height="11" viewBox="0 0 11 11"><path d="M1 9.600v-3.200c0-0.800 1-0.800 1.600-0.800c-0.600-3.600 5.400-3.600 5 0c1 0 2 0 2 0.800v3.200z" fill="#dce6f6" stroke="#1c2c5c" stroke-width="0.900"/><path d="M3.600 6c0-2 3.200-2 3.200 0" fill="none" stroke="#4a7cc8" stroke-width="0.800"/></svg>
<svg style="left:755.2px;top:124.80000000000001px" width="11" height="11" viewBox="0 0 11 11"><rect x="0.800" y="0.800" width="3.800" height="3.800" fill="#fff" stroke="#1c2030" stroke-width="0.900"/><rect x="6.200" y="0.800" width="3.800" height="3.800" fill="#fff" stroke="#1c2030" stroke-width="0.900"/><rect x="0.800" y="6.200" width="3.800" height="3.800" fill="#fff" stroke="#1c2030" stroke-width="0.900"/><rect x="6.200" y="6.200" width="3.800" height="3.800" fill="#fff" stroke="#1c2030" stroke-width="0.900"/></svg>
<svg style="left:755.2px;top:138.1px" width="11" height="11" viewBox="0 0 11 11"><path d="M5.500 0.400l1.800 2.200h-1.200v2.300h2.300v-1.200l2.200 1.800l-2.200 1.800v-1.200h-2.300v2.300h1.200l-1.800 2.200l-1.800-2.200h1.200v-2.300h-2.300v1.200l-2.200-1.800l2.200-1.800v1.200h2.300v-2.300h-1.200z" fill="#2c5cb4"/></svg>
<svg style="left:755.2px;top:151.3px" width="11" height="11" viewBox="0 0 11 11"><path d="M3.400 2.400a4 4 0 1 0 4.400 0.200" fill="none" stroke="#1c2c5c" stroke-width="1.400"/><path d="M2 0.600l3.400 0.800l-2 2.600z" fill="#1c2c5c"/></svg>
<svg style="left:755.2px;top:164.7px" width="11" height="11" viewBox="0 0 11 11"><rect x="1" y="1" width="9" height="9" fill="#e8eef8" stroke="#7c94c4" stroke-width="0.900"/><rect x="1" y="5" width="5" height="5" fill="#fff" stroke="#4a6cb0" stroke-width="0.900"/></svg>
<svg style="left:755.2px;top:178.1px" width="11" height="11" viewBox="0 0 11 11"><path d="M1.400 9.800v-8.400h3.400l4.800 8.400z" fill="#e4ecf8" stroke="#1c2c5c" stroke-width="0.900"/><path d="M4.800 1.400v8.400" stroke="#1c2c5c" stroke-width="0.700"/></svg>
<svg style="left:755.2px;top:191.1px" width="11" height="11" viewBox="0 0 11 11"><path d="M0.600 7.400h9.600" stroke="#6c84b4" stroke-width="0.900"/><path d="M3 10l5-9.400" stroke="#6c84b4" stroke-width="0.900"/><path d="M4.200 5.200l1.600 2.200" stroke="#1c2c5c" stroke-width="0.800"/></svg>
<svg style="left:755.2px;top:204.3px" width="11" height="11" viewBox="0 0 11 11"><path d="M0.600 6.400h6.200" stroke="#3c5ca4" stroke-width="1"/><path d="M6.200 10l4-9.400" stroke="#6c84b4" stroke-width="0.900"/><path d="M7 6.400h1.600" stroke="#6c84b4" stroke-width="0.800" stroke-dasharray="0.800 0.600"/></svg>
<svg style="left:755.2px;top:217.5px" width="11" height="11" viewBox="0 0 11 11"><path d="M1 2.600h9v6.800h-9z" fill="#eef2fa" stroke="#1c2c5c" stroke-width="1"/><rect x="4.600" y="1.800" width="1.700" height="1.700" fill="#4a7cc8"/></svg>
<svg style="left:755.2px;top:230.7px" width="11" height="11" viewBox="0 0 11 11"><path d="M4 2.600h-3v6.800h9v-6.800h-3" fill="none" stroke="#1c2c5c" stroke-width="1.100"/></svg>
<svg style="left:755.2px;top:244.1px" width="11" height="11" viewBox="0 0 11 11"><path d="M0.400 5.600h3.600M10.600 5.600h-3.600" stroke="#1c2030" stroke-width="1"/><path d="M2.600 3.800l2 1.800l-2 1.800zM8.400 3.800l-2 1.800l2 1.800z" fill="#1c2030"/></svg>
<svg style="left:755.2px;top:257.1px" width="11" height="11" viewBox="0 0 11 11"><path d="M1.600 10v-5.600l3-2.800h5.600" fill="none" stroke="#1c2c5c" stroke-width="1"/><path d="M1.600 4.400l3-2.800" stroke="#4a7cc8" stroke-width="1.200"/></svg>
<svg style="left:755.2px;top:270.3px" width="11" height="11" viewBox="0 0 11 11"><path d="M1.600 10v-3c0-3 2-5.200 8.600-5.400" fill="none" stroke="#1c2c5c" stroke-width="1"/><path d="M1.600 7c0-3 2-5 5-5.300" fill="none" stroke="#4a7cc8" stroke-width="1.200"/></svg>
<svg style="left:755.2px;top:284.1px" width="11" height="11" viewBox="0 0 11 11"><path d="M5.400 0.600l1 2.800l2.800-1.200l-1.400 2.600l2.800 1l-2.800 1l1.200 2.800l-2.600-1.400l-1 2.600l-1-2.800l-2.800 1.200l1.400-2.600l-2.600-1l2.800-1l-1.200-2.800l2.600 1.400z" fill="#e84c3c" stroke="#a42c20" stroke-width="0.400"/><path d="M1 10.400l4-4.400" stroke="#2c3c6c" stroke-width="1.100"/><circle cx="5.600" cy="5.200" r="1.400" fill="#f8e04c"/></svg>
<div style="left:754.6px;top:299.6px;width:11.4px;height:0.8px;background:#bcbcc8;"></div>
<div style="left:754.6px;top:300.4px;width:11.4px;height:0.7px;background:#fbfbfd;"></div>
<div style="left:754.6px;top:302px;width:11.4px;height:0.8px;background:#bcbcc8;"></div>
<div style="left:754.6px;top:302.8px;width:11.4px;height:0.7px;background:#fbfbfd;"></div>
<svg style="left:755.2px;top:308.5px" width="11" height="11" viewBox="0 0 11 11"><rect x="0.800" y="0.800" width="6.600" height="6" fill="#9cb8e4" stroke="#2c4c8c" stroke-width="0.700"/><rect x="3.400" y="3.600" width="6.600" height="6" fill="#3c64b4" stroke="#2c4c8c" stroke-width="0.700"/></svg>
<svg style="left:755.2px;top:322.5px" width="11" height="11" viewBox="0 0 11 11"><rect x="0.800" y="0.800" width="6.600" height="6" fill="#3c64b4" stroke="#2c4c8c" stroke-width="0.700"/><rect x="3.400" y="3.600" width="6.600" height="6" fill="#c4d4ec" stroke="#2c4c8c" stroke-width="0.700"/></svg>
<svg style="left:755.2px;top:335.9px" width="11" height="11" viewBox="0 0 11 11"><rect x="0.800" y="0.800" width="6.600" height="6" fill="#3c64b4" stroke="#2c4c8c" stroke-width="0.700"/><rect x="3.400" y="3.600" width="6.600" height="6" fill="#dce6f6" stroke="#2c4c8c" stroke-width="0.700"/></svg>
<svg style="left:755.2px;top:349.5px" width="11" height="11" viewBox="0 0 11 11"><rect x="0.800" y="0.800" width="6.600" height="6" fill="#dce6f6" stroke="#2c4c8c" stroke-width="0.700"/><rect x="3.400" y="3.600" width="6.600" height="6" fill="#6c94d4" stroke="#2c4c8c" stroke-width="0.700"/></svg>
<div class="sb" style="left:742.2px;top:293px;width:10.2px;height:10px;"></div>
<svg style="left:744.600px;top:295.400px" width="6" height="6"><path d="M0.600 1h4.400M0.600 2.600h4.400M0.600 4.200h4.400" stroke="#9ca4c0" stroke-width="0.700"/></svg>
<div style="left:18.4px;top:536.6px;width:477.6px;height:9px;background:#dedee4;"></div>
<div style="left:18.4px;top:545.4px;width:734.4px;height:0.8px;background:#f6f6fa;"></div>
<div style="left:496px;top:536.6px;width:245.6px;height:9px;background:#f5f5f9;"></div>
<div style="left:741.6px;top:536.6px;width:11.2px;height:9px;background:#e6e6ec;"></div>
<div class="sb" style="left:498.2px;top:536.8px;width:10.4px;height:8.6px;"></div>
<svg style="left:500.20px;top:537.90px" width="6.400" height="6.400" viewBox="0 0 6.400 6.400"><path d="M4.200 0.800l-2.400 2.400l2.400 2.400" fill="none" stroke="#2c3248" stroke-width="1.500"/></svg>
<div class="sb" style="left:731.4px;top:536.8px;width:10.4px;height:8.6px;"></div>
<svg style="left:733.40px;top:537.90px" width="6.400" height="6.400" viewBox="0 0 6.400 6.400"><path d="M1.800 0.800l2.400 2.400l-2.400 2.400" fill="none" stroke="#2c3248" stroke-width="1.500"/></svg>
<div class="sb" style="left:638px;top:536.8px;width:10.4px;height:8.6px;"></div>
<svg style="left:640.400px;top:538.400px" width="6" height="6"><path d="M1 0.600v4.400M2.600 0.600v4.400M4.200 0.600v4.400" stroke="#9ca4c0" stroke-width="0.700"/></svg>
<div style="left:19.4px;top:536.6px;width:10.6px;height:8.4px;background:#e0e0e5;border:0.600px solid #c8c8d2;border-left-color:#f4f4f8;border-top-color:#f4f4f8;"></div>
<div style="left:30.2px;top:536.6px;width:10.6px;height:8.4px;background:#e0e0e5;border:0.600px solid #c8c8d2;border-left-color:#f4f4f8;border-top-color:#f4f4f8;"></div>
<div style="left:41px;top:536.6px;width:10.6px;height:8.4px;background:#e0e0e5;border:0.600px solid #c8c8d2;border-left-color:#f4f4f8;border-top-color:#f4f4f8;"></div>
<div style="left:51.8px;top:536.6px;width:10.6px;height:8.4px;background:#e0e0e5;border:0.600px solid #c8c8d2;border-left-color:#f4f4f8;border-top-color:#f4f4f8;"></div>
<svg style="left:19.400px;top:536.600px" width="44" height="8.400" viewBox="0 0 44 8.400"><path d="M7.800 1.200v6l-3.600-3zM3 1.200h1.300v6h-1.300z" fill="#0c0c12"/><path d="M18 1.200v6l-3.600-3z" fill="#0c0c12"/><path d="M25 1.200v6l3.600-3z" fill="#0c0c12"/><path d="M35 1.200v6l3.600-3zM38.800 1.200h1.300v6h-1.300z" fill="#0c0c12"/></svg>
<svg style="left:0px;top:530px" width="300" height="20" viewBox="0 530 300 20"><path d="M201.8 536.6H256.7l-2.4 7c-0.2 0.600-0.500 0.800-1.200 0.800H201.8z" fill="#efeff3" stroke="#2a2a32" stroke-width="0.700"/><path d="M150.8 536.6H205.8l-2.4 7c-0.2 0.600-0.500 0.800-1.200 0.800H150.8z" fill="#efeff3" stroke="#2a2a32" stroke-width="0.700"/><path d="M109.6 536.6H154.8l-2.4 7c-0.2 0.600-0.500 0.800-1.200 0.800H109.6z" fill="#efeff3" stroke="#2a2a32" stroke-width="0.700"/><path d="M94.5 536.6H113.6l-2.4 7c-0.2 0.600-0.500 0.800-1.200 0.800H94.5z" fill="#efeff3" stroke="#2a2a32" stroke-width="0.700"/><path d="M65.200 536.400l2.900 8c0.200 0.600 0.500 0.800 1.200 0.800h26c0.700 0 1-0.200 1.200-0.800l2.300-7.600" fill="#fff" stroke="#1c1c24" stroke-width="0.800"/><path d="M65.600 536.400h32.600" stroke="#fff" stroke-width="1.100"/></svg>
<span class="t" style="left:70.3px;top:537.00px;font-size:7.6px;line-height:8.74px;color:#14141c;transform:scaleX(0.8285);">Модель</span>
<span class="t" style="left:100.7px;top:537.00px;font-size:7.6px;line-height:8.74px;color:#2a2a34;transform:scaleX(0.7853);">A4</span>
<span class="t" style="left:115.4px;top:537.00px;font-size:7.6px;line-height:8.74px;color:#2a2a34;transform:scaleX(0.8768);">А3 без рам</span>
<span class="t" style="left:156.9px;top:537.00px;font-size:7.6px;line-height:8.74px;color:#2a2a34;transform:scaleX(0.8689);">А3 без рам (2)</span>
<span class="t" style="left:207.5px;top:537.00px;font-size:7.6px;line-height:8.74px;color:#2a2a34;transform:scaleX(0.8689);">А3 без рам (3)</span>
<div style="left:3px;top:546.2px;width:765px;height:3.6px;background:#ececf1;"></div>
<div style="left:3px;top:549.2px;width:765px;height:1.4px;background:#9a9aa6;"></div>
<div style="left:3px;top:550.8px;width:765px;height:34px;background:#e1e1e6;"></div>
<div style="left:6.2px;top:555px;width:0.9px;height:25px;background:#bcbcc8;"></div>
<div style="left:7.1px;top:555px;width:0.7px;height:25px;background:#fbfbfd;"></div>
<div style="left:8.4px;top:555px;width:0.9px;height:25px;background:#bcbcc8;"></div>
<div style="left:9.3px;top:555px;width:0.7px;height:25px;background:#fbfbfd;"></div>
<div style="left:11.8px;top:552.6px;width:752px;height:29.8px;background:#fff;border-left:1.200px solid #4c4c58;border-top:1.100px solid #484854;"></div>
<div style="left:13.2px;top:572.4px;width:700px;height:0.8px;background:#9c9ca8;"></div>
<span class="t" style="left:13.8px;top:554.01px;font-size:8.24px;line-height:9.48px;color:#3a3a44;transform:scaleX(0.9780);font-family:&quot;Liberation Mono&quot;,monospace;">Сетка слишком плотна для отображения на мониторе</span>
<span class="t" style="left:13.8px;top:561.01px;font-size:8.24px;line-height:9.48px;color:#3a3a44;transform:scaleX(0.9780);font-family:&quot;Liberation Mono&quot;,monospace;">Сетка слишком плотна для отображения на мониторе</span>
<div style="left:753.4px;top:552.4px;width:10.4px;height:20.4px;background:#f5f5f9;"></div>
<div class="sb" style="left:753.8px;top:553.2px;width:9.6px;height:9px;"></div>
<svg style="left:755.40px;top:554.40px" width="6.400" height="6.400" viewBox="0 0 6.400 6.400"><path d="M0.800 4.200l2.400-2.400l2.400 2.400" fill="none" stroke="#2c3248" stroke-width="1.500"/></svg>
<div class="sb" style="left:753.8px;top:562.8px;width:9.6px;height:9px;"></div>
<svg style="left:755.40px;top:564.20px" width="6.400" height="6.400" viewBox="0 0 6.400 6.400"><path d="M0.800 1.800l2.400 2.400l2.400-2.400" fill="none" stroke="#2c3248" stroke-width="1.500"/></svg>
<div style="left:713.4px;top:573.2px;width:40px;height:9px;background:#f5f5f9;"></div>
<div class="sb" style="left:713.8px;top:573.6px;width:10px;height:8.2px;"></div>
<svg style="left:715.60px;top:574.50px" width="6.400" height="6.400" viewBox="0 0 6.400 6.400"><path d="M4.200 0.800l-2.400 2.400l2.400 2.400" fill="none" stroke="#2c3248" stroke-width="1.500"/></svg>
<div class="sb" style="left:724.2px;top:573.6px;width:9.6px;height:8.2px;"></div>
<div class="sb" style="left:743.4px;top:573.6px;width:10px;height:8.2px;"></div>
<svg style="left:745.20px;top:574.50px" width="6.400" height="6.400" viewBox="0 0 6.400 6.400"><path d="M1.800 0.800l2.400 2.400l-2.400 2.400" fill="none" stroke="#2c3248" stroke-width="1.500"/></svg>
<div style="left:753.4px;top:572.8px;width:10.4px;height:9.6px;background:#e6e6ec;"></div>
<div style="left:3px;top:584.8px;width:765px;height:12.4px;background:#e1e1e6;"></div>
<div style="left:3px;top:584.6px;width:765px;height:0.8px;background:#f8f8fb;"></div>
<div style="left:4.4px;top:586.6px;width:144px;height:10.2px;border:0.700px solid #b4b4c0;border-right-color:#f8f8fb;border-bottom-color:#f8f8fb;"></div>
<span class="t" style="left:6.8px;top:588.04px;font-size:8.2px;line-height:9.43px;color:#44444e;transform:scaleX(0.7939);">-266502.1449, -371399.1604, 0.0000</span>
<div style="left:151.4px;top:586.8px;width:16.400000000000006px;height:10.4px;background:#ebebef;border:0.700px solid #f8f8fb;border-right-color:#b8b8c4;border-bottom-color:#b8b8c4;"></div>
<span class="t" style="left:153.2px;top:587.00px;font-size:8.9px;line-height:10.23px;color:#26262e;transform:scaleX(0.6768);">ШАГ</span>
<div style="left:169.5px;top:586.8px;width:24.400000000000006px;height:10.4px;background:#ebebef;border:0.700px solid #f8f8fb;border-right-color:#b8b8c4;border-bottom-color:#b8b8c4;"></div>
<span class="t" style="left:171.2px;top:587.00px;font-size:8.9px;line-height:10.23px;color:#26262e;transform:scaleX(0.7192);">СЕТКА</span>
<div style="left:195.5px;top:586.8px;width:20.69999999999999px;height:10.4px;background:#ebebef;border:0.700px solid #f8f8fb;border-right-color:#b8b8c4;border-bottom-color:#b8b8c4;"></div>
<span class="t" style="left:197.2px;top:587.00px;font-size:8.9px;line-height:10.23px;color:#26262e;transform:scaleX(0.7125);">ОРТО</span>
<div style="left:218.4px;top:586.8px;width:42.099999999999994px;height:10.4px;background:#ececf2;border:0.900px solid #3c3c48;border-right-color:#fafafd;border-bottom-color:#fafafd;"></div>
<span class="t" style="left:221px;top:587.00px;font-size:8.9px;line-height:10.23px;color:#26262e;transform:scaleX(0.7015);">ОТС-ПОЛЯР</span>
<div style="left:262.4px;top:586.8px;width:38.80000000000001px;height:10.4px;background:#ececf2;border:0.900px solid #3c3c48;border-right-color:#fafafd;border-bottom-color:#fafafd;"></div>
<span class="t" style="left:265px;top:587.00px;font-size:8.9px;line-height:10.23px;color:#26262e;transform:scaleX(0.7104);">ПРИВЯЗКА</span>
<div style="left:303.8px;top:586.8px;width:43.599999999999966px;height:10.4px;background:#ececf2;border:0.900px solid #3c3c48;border-right-color:#fafafd;border-bottom-color:#fafafd;"></div>
<span class="t" style="left:306.6px;top:587.00px;font-size:8.9px;line-height:10.23px;color:#26262e;transform:scaleX(0.6572);">ОТС-ОБЪЕКТ</span>
<div style="left:349.8px;top:586.8px;width:17.80000000000001px;height:10.4px;background:#ececf2;border:0.900px solid #3c3c48;border-right-color:#fafafd;border-bottom-color:#fafafd;"></div>
<span class="t" style="left:352.6px;top:587.00px;font-size:8.9px;line-height:10.23px;color:#26262e;transform:scaleX(0.6578);">ДИН</span>
<div style="left:369.6px;top:586.8px;width:15.399999999999977px;height:10.4px;background:#ececf2;border:0.900px solid #3c3c48;border-right-color:#fafafd;border-bottom-color:#fafafd;"></div>
<span class="t" style="left:372px;top:587.00px;font-size:8.9px;line-height:10.23px;color:#26262e;transform:scaleX(0.5901);">ВЕС</span>
<div style="left:387.2px;top:586.8px;width:31.0px;height:10.4px;background:#ececf2;border:0.900px solid #3c3c48;border-right-color:#fafafd;border-bottom-color:#fafafd;"></div>
<span class="t" style="left:389.8px;top:587.00px;font-size:8.9px;line-height:10.23px;color:#26262e;transform:scaleX(0.6828);">МОДЕЛЬ</span>
<div style="left:722.4px;top:586.4px;width:27px;height:10.6px;border:0.700px solid #b4b4c0;border-right-color:#f8f8fb;border-bottom-color:#f8f8fb;"></div>
<svg style="left:725px;top:586.800px" width="10" height="10" viewBox="0 0 10 10"><circle cx="4.800" cy="4" r="3.200" fill="#dce8f8" stroke="#3c64b4" stroke-width="0.900"/><path d="M4.800 1v6M2 4h5.600" stroke="#3c64b4" stroke-width="0.600"/><path d="M1.600 9.400h6.400M4.800 7.200v2.200" stroke="#2c3c6c" stroke-width="1"/></svg>
<svg style="left:736.400px;top:586.800px" width="10" height="10" viewBox="0 0 10 10"><rect x="0.800" y="4.400" width="6.400" height="5" rx="0.600" fill="#e4c83c" stroke="#8c7414" stroke-width="0.800"/><path d="M5.200 4.400v-1.400c0-2.400 3.800-2.400 3.800 0v0.800" fill="none" stroke="#8c7414" stroke-width="1"/></svg>
<svg style="left:752.400px;top:590.600px" width="5" height="4"><path d="M0.200 0.400h4.200l-2.100 2.600z" fill="#14141c"/></svg>
<svg style="left:760px;top:589px" width="8" height="8" viewBox="0 0 8 8"><path d="M6.400 1.600v1M6.400 4v1M4 4v1M6.400 6.400v1M4 6.400v1M1.600 6.400v1" stroke="#a4a4b4" stroke-width="1.200"/></svg>
<svg style="left:0;top:0;filter:blur(0.3px)" width="771" height="600" viewBox="0 0 771 600" font-family="Liberation Sans, sans-serif"><defs>
<pattern id="logs" width="4" height="2.6" patternUnits="userSpaceOnUse"><rect width="4" height="2.6" fill="#c67646"/><rect y="0" width="4" height="0.7" fill="#d89468"/><rect y="1.6" width="4" height="1" fill="#7a3a1e"/></pattern>
<pattern id="roofv" width="5.4" height="4" patternUnits="userSpaceOnUse"><rect width="5.4" height="4" fill="#9e4628"/><rect x="0" width="1.2" height="4" fill="#ac5636"/><rect x="4.6" width="0.8" height="4" fill="#4a1a0c"/></pattern>
<pattern id="plinth" width="2.4" height="2" patternUnits="userSpaceOnUse"><rect width="2.4" height="2" fill="#5a1e14"/><rect width="1.1" height="0.9" fill="#34100a"/><rect x="1.2" y="1" width="1.1" height="0.9" fill="#843422"/></pattern>
</defs><rect x="68.80" y="118.00" width="19.00" height="12.00" fill="#5a2412" stroke="none" stroke-width="0.5" />
<rect x="70.00" y="119.40" width="8.00" height="9.00" fill="#7a3a22" stroke="none" stroke-width="0.5" />
<path d="M71.30 169.00L71.30 130.00L103.80 112.50L135.00 126.00L135.00 132.00L150.00 139.50L150.00 169.00z" stroke="#3a1a10" stroke-width="0.4" fill="url(#logs)" />
<rect x="79.20" y="121.00" width="3.30" height="48.00" fill="#5a2412" stroke="none" stroke-width="0.5" />
<rect x="93.20" y="121.00" width="3.30" height="48.00" fill="#5a2412" stroke="none" stroke-width="0.5" />
<rect x="102.60" y="121.00" width="3.30" height="48.00" fill="#5a2412" stroke="none" stroke-width="0.5" />
<rect x="71.30" y="130.00" width="1.90" height="39.00" fill="#5a2412" stroke="none" stroke-width="0.5" />
<path d="M73.20 163.00L73.20 134.60L78.80 131.20L78.80 163.00z" stroke="#2a1a14" stroke-width="0.5" fill="#fff" />
<path d="M83.00 163.00L83.00 129.40L92.80 124.00L92.80 163.00z" stroke="#2a1a14" stroke-width="0.5" fill="#fff" />
<path d="M97.00 163.00L97.00 122.40L102.40 119.60L102.40 163.00z" stroke="#2a1a14" stroke-width="0.5" fill="#fff" />
<path d="M73.20 141.50L78.80 141.50" stroke="#2a1a14" stroke-width="0.6" />
<path d="M73.20 152.50L78.80 152.50" stroke="#2a1a14" stroke-width="0.6" />
<path d="M83.00 141.50L92.80 141.50" stroke="#2a1a14" stroke-width="0.6" />
<path d="M83.00 152.50L92.80 152.50" stroke="#2a1a14" stroke-width="0.6" />
<path d="M97.00 141.50L102.40 141.50" stroke="#2a1a14" stroke-width="0.6" />
<path d="M97.00 152.50L102.40 152.50" stroke="#2a1a14" stroke-width="0.6" />
<path d="M87.50 127.00L87.50 163.00" stroke="#2a1a14" stroke-width="0.7" />
<path d="M76.50 133.00L76.50 163.00" stroke="#2a1a14" stroke-width="0.4" />
<path d="M99.50 121.00L99.50 163.00" stroke="#2a1a14" stroke-width="0.4" />
<rect x="72.00" y="163.00" width="31.00" height="6.00" fill="#5a2412" stroke="none" stroke-width="0.5" />
<rect x="82.60" y="163.60" width="10.40" height="3.00" fill="#8a4426" stroke="none" stroke-width="0.5" />
<rect x="108.40" y="125.80" width="14.20" height="10.40" fill="#fff" stroke="#3a1c12" stroke-width="0.9" />
<path d="M115.50 125.80L115.50 136.20" stroke="#3a1c12" stroke-width="0.8" />
<rect x="95.80" y="136.80" width="33.40" height="6.60" fill="#8d8578" stroke="#3a2a20" stroke-width="0.4" />
<rect x="97.40" y="138.40" width="30.00" height="3.20" fill="#4a2a1c" stroke="none" stroke-width="0.5" />
<rect x="104.00" y="138.40" width="1.50" height="3.20" fill="#e8e0d4" stroke="none" stroke-width="0.5" />
<rect x="108.00" y="138.40" width="1.50" height="3.20" fill="#e8e0d4" stroke="none" stroke-width="0.5" />
<rect x="111.60" y="138.40" width="1.50" height="3.20" fill="#e8e0d4" stroke="none" stroke-width="0.5" />
<rect x="114.60" y="138.40" width="1.50" height="3.20" fill="#e8e0d4" stroke="none" stroke-width="0.5" />
<rect x="118.00" y="138.40" width="1.50" height="3.20" fill="#e8e0d4" stroke="none" stroke-width="0.5" />
<rect x="121.40" y="138.40" width="1.50" height="3.20" fill="#e8e0d4" stroke="none" stroke-width="0.5" />
<rect x="127.20" y="124.60" width="2.00" height="44.40" fill="#5a2412" stroke="none" stroke-width="0.5" />
<rect x="108.40" y="150.40" width="7.40" height="10.40" fill="#fff" stroke="#3a1c12" stroke-width="0.9" />
<rect x="132.40" y="150.20" width="10.40" height="10.00" fill="#fff" stroke="#3a1c12" stroke-width="0.9" />
<rect x="95.80" y="161.40" width="46.60" height="7.00" fill="#8d8578" stroke="#3a2a20" stroke-width="0.4" />
<rect x="97.40" y="163.40" width="44.00" height="3.00" fill="#4a2a1c" stroke="none" stroke-width="0.5" />
<rect x="100.00" y="163.40" width="1.40" height="3.00" fill="#d8d0c4" stroke="none" stroke-width="0.5" />
<rect x="104.00" y="163.40" width="1.40" height="3.00" fill="#d8d0c4" stroke="none" stroke-width="0.5" />
<rect x="108.00" y="163.40" width="1.40" height="3.00" fill="#d8d0c4" stroke="none" stroke-width="0.5" />
<rect x="112.00" y="163.40" width="1.40" height="3.00" fill="#d8d0c4" stroke="none" stroke-width="0.5" />
<rect x="116.00" y="163.40" width="1.40" height="3.00" fill="#d8d0c4" stroke="none" stroke-width="0.5" />
<rect x="120.00" y="163.40" width="1.40" height="3.00" fill="#d8d0c4" stroke="none" stroke-width="0.5" />
<rect x="124.00" y="163.40" width="1.40" height="3.00" fill="#d8d0c4" stroke="none" stroke-width="0.5" />
<rect x="128.00" y="163.40" width="1.40" height="3.00" fill="#d8d0c4" stroke="none" stroke-width="0.5" />
<rect x="132.00" y="163.40" width="1.40" height="3.00" fill="#d8d0c4" stroke="none" stroke-width="0.5" />
<rect x="136.00" y="163.40" width="1.40" height="3.00" fill="#d8d0c4" stroke="none" stroke-width="0.5" />
<rect x="142.60" y="160.40" width="7.40" height="8.60" fill="#5a3a2a" stroke="none" stroke-width="0.5" />
<path d="M143.00 161.00L149.00 167.00" stroke="#d8d0c4" stroke-width="0.5" />
<path d="M145.00 164.50L149.00 164.50" stroke="#d8d0c4" stroke-width="0.4" />
<rect x="71.30" y="168.80" width="78.70" height="4.70" fill="url(#plinth)" stroke="#3a1210" stroke-width="0.3" />
<path d="M64.20 131.60L103.80 110.30L136.80 124.80" stroke="#140e0c" stroke-width="2.7" fill="none" stroke-linejoin="miter"/>
<path d="M64.20 132.05L103.80 110.75L136.80 125.25" stroke="#c8b09c" stroke-width="0.4" fill="none" />
<path d="M128.40 130.40L157.20 141.80" stroke="#140e0c" stroke-width="2.7" fill="none" stroke-linejoin="miter"/>
<path d="M128.40 130.85L157.20 142.25" stroke="#c8b09c" stroke-width="0.4" fill="none" />
<path d="M103.80 111.00L103.80 123.00" stroke="#5a2412" stroke-width="1.8" fill="none" />
<rect x="117.80" y="107.00" width="6.00" height="10.60" fill="#3a2218" stroke="#1c1412" stroke-width="0.4" />
<rect x="116.80" y="105.20" width="8.00" height="2.20" fill="#1c1412" stroke="none" stroke-width="0.5" />
<path d="M118.00 109.50L123.60 109.50" stroke="#6a4a3a" stroke-width="0.4" />
<path d="M118.00 112.50L123.60 112.50" stroke="#6a4a3a" stroke-width="0.4" />
<path d="M118.00 114.50L123.60 114.50" stroke="#6a4a3a" stroke-width="0.4" />
<path d="M59.40 173.50L161.60 173.50" stroke="#0c0c0c" stroke-width="1" />
<path d="M72.50 173.70L72.50 195.40" stroke="#e01818" stroke-width="0.75" />
<path d="M104.50 173.70L104.50 195.40" stroke="#e01818" stroke-width="0.75" />
<path d="M127.50 173.70L127.50 195.40" stroke="#e01818" stroke-width="0.75" />
<path d="M149.50 173.70L149.50 195.40" stroke="#e01818" stroke-width="0.75" />
<path d="M71.30 185.50L150.80 185.50" stroke="#222" stroke-width="0.55" />
<path d="M71.30 192.50L150.80 192.50" stroke="#222" stroke-width="0.55" />
<text x="85.75" y="184.50" font-size="4.3" text-anchor="middle" font-weight="bold" fill="#222" font-style="italic">3600</text>
<text x="113.00" y="184.50" font-size="4.3" text-anchor="middle" font-weight="bold" fill="#222" font-style="italic">2700</text>
<text x="135.70" y="184.50" font-size="4.3" text-anchor="middle" font-weight="bold" fill="#222" font-style="italic">3400</text>
<text x="113.05" y="191.10" font-size="4.3" text-anchor="middle" font-weight="bold" fill="#222" font-style="italic">9700</text>
<circle cx="72.50" cy="199.40" r="4.0" fill="#fff" stroke="#111" stroke-width="0.9"/>
<text x="72.50" y="201.10" font-size="4.8" text-anchor="middle" font-weight="bold" fill="#111" stroke="#111" stroke-width="0.25">1</text>
<circle cx="104.20" cy="199.40" r="4.0" fill="#fff" stroke="#111" stroke-width="0.9"/>
<text x="104.20" y="201.10" font-size="4.8" text-anchor="middle" font-weight="bold" fill="#111" stroke="#111" stroke-width="0.25">2</text>
<circle cx="127.00" cy="199.40" r="4.0" fill="#fff" stroke="#111" stroke-width="0.9"/>
<text x="127.00" y="201.10" font-size="4.8" text-anchor="middle" font-weight="bold" fill="#111" stroke="#111" stroke-width="0.25">3</text>
<circle cx="149.60" cy="199.40" r="4.0" fill="#fff" stroke="#111" stroke-width="0.9"/>
<text x="149.60" y="201.10" font-size="4.8" text-anchor="middle" font-weight="bold" fill="#111" stroke="#111" stroke-width="0.25">4</text>
<path d="M71.60 186.30L73.40 184.50" stroke="#222" stroke-width="0.5" />
<path d="M103.30 186.30L105.10 184.50" stroke="#222" stroke-width="0.5" />
<path d="M126.10 186.30L127.90 184.50" stroke="#222" stroke-width="0.5" />
<path d="M148.70 186.30L150.50 184.50" stroke="#222" stroke-width="0.5" />
<path d="M71.60 192.90L73.40 191.10" stroke="#222" stroke-width="0.5" />
<path d="M148.70 192.90L150.50 191.10" stroke="#222" stroke-width="0.5" />
<text x="38.00" y="108.70" font-size="4.5" font-weight="bold" fill="#000" stroke="#000" stroke-width="0.22" textLength="13.20" lengthAdjust="spacingAndGlyphs">+6.615</text>
<path d="M37.80 109.50L51.80 109.50" stroke="#111" stroke-width="0.6" />
<path d="M51.60 109.20L53.20 111.40" stroke="#111" stroke-width="0.6" fill="none" />
<path d="M52.00 111.50L54.20 111.50" stroke="#111" stroke-width="0.5" fill="none" />
<text x="38.00" y="128.10" font-size="4.5" font-weight="bold" fill="#000" stroke="#000" stroke-width="0.22" textLength="13.20" lengthAdjust="spacingAndGlyphs">+4.400</text>
<path d="M37.80 128.50L51.80 128.50" stroke="#111" stroke-width="0.6" />
<path d="M51.60 128.60L53.20 130.80" stroke="#111" stroke-width="0.6" fill="none" />
<path d="M52.00 130.90L54.20 130.90" stroke="#111" stroke-width="0.5" fill="none" />
<text x="38.00" y="165.90" font-size="4.5" font-weight="bold" fill="#000" stroke="#000" stroke-width="0.22" textLength="10.20" lengthAdjust="spacingAndGlyphs">0.000</text>
<path d="M37.80 166.50L48.80 166.50" stroke="#111" stroke-width="0.6" />
<path d="M48.60 166.40L50.20 168.60" stroke="#111" stroke-width="0.6" fill="none" />
<path d="M49.00 168.70L51.20 168.70" stroke="#111" stroke-width="0.5" fill="none" />
<rect x="233.60" y="140.60" width="9.30" height="28.00" fill="#5a2412" stroke="none" stroke-width="0.5" />
<rect x="235.40" y="144.00" width="2.20" height="21.00" fill="#fff" stroke="none" stroke-width="0.5" />
<rect x="238.80" y="144.00" width="2.20" height="21.00" fill="#fff" stroke="none" stroke-width="0.5" />
<path d="M235.40 154.50L241.00 154.50" stroke="#5a2412" stroke-width="0.5" />
<rect x="242.90" y="142.60" width="55.20" height="26.70" fill="url(#logs)" stroke="#3a1a10" stroke-width="0.4" />
<rect x="257.20" y="150.20" width="10.40" height="10.20" fill="#fff" stroke="#3a1c12" stroke-width="0.9" />
<rect x="298.00" y="136.00" width="20.20" height="32.60" fill="url(#logs)" stroke="#3a1a10" stroke-width="0.4" />
<rect x="298.00" y="142.00" width="3.00" height="26.60" fill="#5a2412" stroke="none" stroke-width="0.5" />
<rect x="316.40" y="129.00" width="1.90" height="39.60" fill="#5a2412" stroke="none" stroke-width="0.5" />
<rect x="301.00" y="142.00" width="15.40" height="5.00" fill="#5a2412" stroke="none" stroke-width="0.5" />
<rect x="303.00" y="150.40" width="5.40" height="11.00" fill="#fff" stroke="#3a1c12" stroke-width="0.9" />
<rect x="310.00" y="150.40" width="5.40" height="11.00" fill="#fff" stroke="#3a1c12" stroke-width="0.9" />
<rect x="306.40" y="133.60" width="10.00" height="7.40" fill="#fff" stroke="none" stroke-width="0.5" />
<rect x="306.40" y="137.00" width="10.00" height="3.60" fill="#4a2a1c" stroke="none" stroke-width="0.5" />
<rect x="307.40" y="137.00" width="1.10" height="3.60" fill="#f0ece4" stroke="none" stroke-width="0.5" />
<rect x="309.60" y="137.00" width="1.10" height="3.60" fill="#f0ece4" stroke="none" stroke-width="0.5" />
<rect x="311.80" y="137.00" width="1.10" height="3.60" fill="#f0ece4" stroke="none" stroke-width="0.5" />
<rect x="314.00" y="137.00" width="1.10" height="3.60" fill="#f0ece4" stroke="none" stroke-width="0.5" />
<rect x="302.00" y="161.40" width="9.60" height="5.40" fill="#3a2a20" stroke="none" stroke-width="0.5" />
<rect x="303.00" y="162.40" width="7.60" height="3.40" fill="#f4f0ea" stroke="none" stroke-width="0.5" />
<path d="M306.50 162.40L306.50 165.80" stroke="#3a2a20" stroke-width="0.7" />
<path d="M312.60 166.60L314.00 163.00L316.00 165.40" stroke="#2a1a14" stroke-width="0.5" fill="none" />
<rect x="232.60" y="123.60" width="72.00" height="6.80" fill="#5a2412" stroke="none" stroke-width="0.5" />
<rect x="236.00" y="125.60" width="64.00" height="2.00" fill="#b0643c" stroke="none" stroke-width="0.5" />
<rect x="233.60" y="130.00" width="2.20" height="12.00" fill="#5a2412" stroke="none" stroke-width="0.5" />
<rect x="237.60" y="130.00" width="1.60" height="12.00" fill="#5a2412" stroke="none" stroke-width="0.5" />
<rect x="235.80" y="130.00" width="1.80" height="12.00" fill="#fff" stroke="none" stroke-width="0.5" />
<rect x="226.50" y="110.60" width="80.30" height="13.00" fill="url(#roofv)" stroke="#3a140a" stroke-width="0.5" />
<rect x="306.80" y="119.40" width="16.30" height="9.40" fill="url(#roofv)" stroke="#3a140a" stroke-width="0.5" />
<rect x="236.00" y="129.80" width="70.00" height="11.40" fill="url(#roofv)" stroke="#3a140a" stroke-width="0.5" />
<path d="M226.50 110.50L306.80 110.50" stroke="#1a0c08" stroke-width="1" />
<path d="M226.50 123.50L306.80 123.50" stroke="#1a0c08" stroke-width="1.1" />
<path d="M235.00 141.50L306.20 141.50" stroke="#1a0c08" stroke-width="1.1" />
<path d="M306.80 129.50L323.20 129.50" stroke="#1a0c08" stroke-width="1" />
<rect x="320.60" y="129.20" width="1.40" height="8.00" fill="#5a2412" stroke="none" stroke-width="0.5" />
<rect x="278.80" y="107.00" width="5.80" height="11.00" fill="#2a1c18" stroke="#1c1412" stroke-width="0.4" />
<rect x="277.80" y="105.20" width="7.80" height="2.20" fill="#1c1412" stroke="none" stroke-width="0.5" />
<path d="M279.60 109.50L284.00 109.50" stroke="#d8d0c8" stroke-width="0.5" />
<path d="M279.60 112.50L284.00 112.50" stroke="#d8d0c8" stroke-width="0.5" />
<path d="M279.60 114.50L284.00 114.50" stroke="#d8d0c8" stroke-width="0.5" />
<rect x="233.60" y="169.30" width="84.80" height="4.00" fill="url(#plinth)" stroke="#3a1210" stroke-width="0.3" />
<path d="M218.00 173.50L335.00 173.50" stroke="#0c0c0c" stroke-width="1" />
<path d="M234.50 173.50L234.50 196.80" stroke="#e01818" stroke-width="0.75" />
<path d="M242.50 173.50L242.50 196.80" stroke="#e01818" stroke-width="0.75" />
<path d="M298.50 173.50L298.50 196.80" stroke="#e01818" stroke-width="0.75" />
<path d="M317.50 173.50L317.50 196.80" stroke="#e01818" stroke-width="0.75" />
<path d="M233.30 185.50L318.70 185.50" stroke="#222" stroke-width="0.55" />
<path d="M233.30 193.50L318.70 193.50" stroke="#222" stroke-width="0.55" />
<text x="238.65" y="184.60" font-size="4.3" text-anchor="middle" font-weight="bold" fill="#222" font-style="italic">1000</text>
<text x="265.30" y="184.60" font-size="4.3" text-anchor="middle" font-weight="bold" fill="#222" font-style="italic">6700</text>
<text x="306.55" y="184.60" font-size="4.3" text-anchor="middle" font-weight="bold" fill="#222" font-style="italic">2400</text>
<text x="268.40" y="192.10" font-size="4.3" text-anchor="middle" font-weight="bold" fill="#222" font-style="italic">10000</text>
<circle cx="234.50" cy="200.80" r="4.0" fill="#fff" stroke="#111" stroke-width="0.9"/>
<text x="234.50" y="202.50" font-size="4.8" text-anchor="middle" font-weight="bold" fill="#111" stroke="#111" stroke-width="0.25">А</text>
<circle cx="242.80" cy="200.80" r="4.0" fill="#fff" stroke="#111" stroke-width="0.9"/>
<text x="242.80" y="202.50" font-size="4.8" text-anchor="middle" font-weight="bold" fill="#111" stroke="#111" stroke-width="0.25">Б</text>
<circle cx="298.60" cy="200.80" r="4.0" fill="#fff" stroke="#111" stroke-width="0.9"/>
<text x="298.60" y="202.50" font-size="4.8" text-anchor="middle" font-weight="bold" fill="#111" stroke="#111" stroke-width="0.25">Г</text>
<circle cx="317.50" cy="200.80" r="4.0" fill="#fff" stroke="#111" stroke-width="0.9"/>
<text x="317.50" y="202.50" font-size="4.8" text-anchor="middle" font-weight="bold" fill="#111" stroke="#111" stroke-width="0.25">Д</text>
<path d="M233.60 186.40L235.40 184.60" stroke="#222" stroke-width="0.5" />
<path d="M241.90 186.40L243.70 184.60" stroke="#222" stroke-width="0.5" />
<path d="M297.70 186.40L299.50 184.60" stroke="#222" stroke-width="0.5" />
<path d="M316.60 186.40L318.40 184.60" stroke="#222" stroke-width="0.5" />
<path d="M233.60 193.90L235.40 192.10" stroke="#222" stroke-width="0.5" />
<path d="M316.60 193.90L318.40 192.10" stroke="#222" stroke-width="0.5" />
<text x="173.40" y="102.50" font-size="4.5" font-weight="bold" fill="#000" stroke="#000" stroke-width="0.22" textLength="13.20" lengthAdjust="spacingAndGlyphs">+7.030</text>
<path d="M173.20 103.50L187.20 103.50" stroke="#111" stroke-width="0.6" />
<path d="M173.40 103.00L171.80 105.20" stroke="#111" stroke-width="0.6" fill="none" />
<path d="M170.80 105.30L173.00 105.30" stroke="#111" stroke-width="0.5" fill="none" />
<text x="173.40" y="126.90" font-size="4.5" font-weight="bold" fill="#000" stroke="#000" stroke-width="0.22" textLength="13.20" lengthAdjust="spacingAndGlyphs">+3.490</text>
<path d="M173.20 127.50L187.20 127.50" stroke="#111" stroke-width="0.6" />
<path d="M173.40 127.40L171.80 129.60" stroke="#111" stroke-width="0.6" fill="none" />
<path d="M170.80 129.70L173.00 129.70" stroke="#111" stroke-width="0.5" fill="none" />
<text x="173.40" y="137.30" font-size="4.5" font-weight="bold" fill="#000" stroke="#000" stroke-width="0.22" textLength="13.20" lengthAdjust="spacingAndGlyphs">+3.300</text>
<path d="M173.20 137.50L187.20 137.50" stroke="#111" stroke-width="0.6" />
<path d="M173.40 137.80L171.80 140.00" stroke="#111" stroke-width="0.6" fill="none" />
<path d="M170.80 140.10L173.00 140.10" stroke="#111" stroke-width="0.5" fill="none" />
<text x="173.40" y="157.70" font-size="4.5" font-weight="bold" fill="#000" stroke="#000" stroke-width="0.22" textLength="13.20" lengthAdjust="spacingAndGlyphs">+0.500</text>
<path d="M173.20 158.50L187.20 158.50" stroke="#111" stroke-width="0.6" />
<path d="M173.40 158.20L171.80 160.40" stroke="#111" stroke-width="0.6" fill="none" />
<path d="M170.80 160.50L173.00 160.50" stroke="#111" stroke-width="0.5" fill="none" />
<text x="199.40" y="107.70" font-size="4.5" font-weight="bold" fill="#000" stroke="#000" stroke-width="0.22" textLength="13.20" lengthAdjust="spacingAndGlyphs">+6.530</text>
<path d="M199.20 108.50L213.20 108.50" stroke="#111" stroke-width="0.6" />
<path d="M213.00 108.20L214.60 110.40" stroke="#111" stroke-width="0.6" fill="none" />
<path d="M213.40 110.50L215.60 110.50" stroke="#111" stroke-width="0.5" fill="none" />
<text x="199.40" y="120.70" font-size="4.5" font-weight="bold" fill="#000" stroke="#000" stroke-width="0.22" textLength="13.20" lengthAdjust="spacingAndGlyphs">+4.600</text>
<path d="M199.20 121.50L213.20 121.50" stroke="#111" stroke-width="0.6" />
<path d="M213.00 121.20L214.60 123.40" stroke="#111" stroke-width="0.6" fill="none" />
<path d="M213.40 123.50L215.60 123.50" stroke="#111" stroke-width="0.5" fill="none" />
<text x="199.40" y="161.50" font-size="4.5" font-weight="bold" fill="#000" stroke="#000" stroke-width="0.22" textLength="13.20" lengthAdjust="spacingAndGlyphs">+0.430</text>
<path d="M199.20 162.50L213.20 162.50" stroke="#111" stroke-width="0.6" />
<path d="M213.00 162.00L214.60 164.20" stroke="#111" stroke-width="0.6" fill="none" />
<path d="M213.40 164.30L215.60 164.30" stroke="#111" stroke-width="0.5" fill="none" />
<text x="339.40" y="102.30" font-size="4.5" font-weight="bold" fill="#000" stroke="#000" stroke-width="0.22" textLength="13.20" lengthAdjust="spacingAndGlyphs">+7.010</text>
<path d="M339.20 102.50L353.20 102.50" stroke="#111" stroke-width="0.6" />
<path d="M339.40 102.80L337.80 105.00" stroke="#111" stroke-width="0.6" fill="none" />
<path d="M336.80 105.10L339.00 105.10" stroke="#111" stroke-width="0.5" fill="none" />
<text x="339.40" y="116.70" font-size="4.5" font-weight="bold" fill="#000" stroke="#000" stroke-width="0.22" textLength="13.20" lengthAdjust="spacingAndGlyphs">+1.000</text>
<path d="M339.20 117.50L353.20 117.50" stroke="#111" stroke-width="0.6" />
<path d="M339.40 117.20L337.80 119.40" stroke="#111" stroke-width="0.6" fill="none" />
<path d="M336.80 119.50L339.00 119.50" stroke="#111" stroke-width="0.5" fill="none" />
<text x="339.40" y="132.10" font-size="4.5" font-weight="bold" fill="#000" stroke="#000" stroke-width="0.22" textLength="13.20" lengthAdjust="spacingAndGlyphs">+3.650</text>
<path d="M339.20 132.50L353.20 132.50" stroke="#111" stroke-width="0.6" />
<path d="M339.40 132.60L337.80 134.80" stroke="#111" stroke-width="0.6" fill="none" />
<path d="M336.80 134.90L339.00 134.90" stroke="#111" stroke-width="0.5" fill="none" />
<text x="339.40" y="138.70" font-size="4.5" font-weight="bold" fill="#000" stroke="#000" stroke-width="0.22" textLength="13.20" lengthAdjust="spacingAndGlyphs">+3.130</text>
<path d="M339.20 139.50L353.20 139.50" stroke="#111" stroke-width="0.6" />
<path d="M339.40 139.20L337.80 141.40" stroke="#111" stroke-width="0.6" fill="none" />
<path d="M336.80 141.50L339.00 141.50" stroke="#111" stroke-width="0.5" fill="none" />
<text x="339.40" y="165.70" font-size="4.5" font-weight="bold" fill="#000" stroke="#000" stroke-width="0.22" textLength="10.20" lengthAdjust="spacingAndGlyphs">0.000</text>
<path d="M339.20 166.50L350.20 166.50" stroke="#111" stroke-width="0.6" />
<path d="M339.40 166.20L337.80 168.40" stroke="#111" stroke-width="0.6" fill="none" />
<path d="M336.80 168.50L339.00 168.50" stroke="#111" stroke-width="0.5" fill="none" />
<rect x="152.60" y="313.20" width="15.40" height="10.00" fill="#5a2412" stroke="none" stroke-width="0.5" />
<rect x="158.00" y="314.40" width="3.00" height="8.00" fill="#7a3a22" stroke="none" stroke-width="0.5" />
<path d="M86.00 364.00L86.00 336.40L107.60 327.60L107.60 319.00L131.70 308.60L146.00 315.60L166.00 324.80L165.30 364.00z" stroke="#3a1a10" stroke-width="0.4" fill="url(#logs)" />
<path d="M107.80 319.60L107.80 364.00" stroke="#5a2412" stroke-width="1.6" />
<path d="M131.90 309.00L131.90 364.00" stroke="#5a2412" stroke-width="2" />
<rect x="86.00" y="337.00" width="1.80" height="27.00" fill="#5a2412" stroke="none" stroke-width="0.5" />
<rect x="163.60" y="326.00" width="1.80" height="38.00" fill="#5a2412" stroke="none" stroke-width="0.5" />
<rect x="90.00" y="345.40" width="7.40" height="6.20" fill="#fff" stroke="#3a1c12" stroke-width="0.9" />
<rect x="100.60" y="345.40" width="6.20" height="18.00" fill="#fff" stroke="#3a1c12" stroke-width="0.9" />
<path d="M100.60 355.50L106.80 355.50" stroke="#3a1c12" stroke-width="0.7" />
<rect x="115.80" y="345.40" width="6.60" height="18.00" fill="#fff" stroke="#3a1c12" stroke-width="0.9" />
<path d="M115.80 355.50L122.40 355.50" stroke="#3a1c12" stroke-width="0.7" />
<rect x="115.80" y="324.80" width="6.60" height="5.00" fill="#fff" stroke="#3a1c12" stroke-width="0.9" />
<path d="M136.40 331.00L136.40 325.40L142.80 322.00L142.80 331.00z" stroke="#3a1c12" stroke-width="0.8" fill="#fff" />
<rect x="131.90" y="332.00" width="33.40" height="6.40" fill="#8d8578" stroke="#3a2a20" stroke-width="0.4" />
<rect x="133.40" y="333.80" width="30.40" height="2.80" fill="#4a2a1c" stroke="none" stroke-width="0.5" />
<rect x="139.00" y="333.80" width="1.40" height="2.80" fill="#e8e0d4" stroke="none" stroke-width="0.5" />
<rect x="142.00" y="333.80" width="1.40" height="2.80" fill="#e8e0d4" stroke="none" stroke-width="0.5" />
<rect x="145.40" y="333.80" width="1.40" height="2.80" fill="#e8e0d4" stroke="none" stroke-width="0.5" />
<rect x="151.00" y="333.80" width="1.40" height="2.80" fill="#e8e0d4" stroke="none" stroke-width="0.5" />
<rect x="155.00" y="333.80" width="1.40" height="2.80" fill="#e8e0d4" stroke="none" stroke-width="0.5" />
<rect x="158.40" y="333.80" width="1.40" height="2.80" fill="#e8e0d4" stroke="none" stroke-width="0.5" />
<rect x="143.60" y="338.40" width="1.60" height="26.00" fill="#5a2412" stroke="none" stroke-width="0.5" />
<rect x="153.40" y="338.40" width="1.60" height="26.00" fill="#5a2412" stroke="none" stroke-width="0.5" />
<rect x="134.00" y="345.80" width="8.20" height="10.00" fill="#fff" stroke="#3a1c12" stroke-width="0.9" />
<rect x="145.80" y="345.80" width="6.80" height="10.00" fill="#fff" stroke="#3a1c12" stroke-width="0.9" />
<rect x="155.80" y="345.80" width="7.00" height="10.00" fill="#fff" stroke="#3a1c12" stroke-width="0.9" />
<rect x="86.00" y="364.00" width="79.30" height="5.00" fill="url(#plinth)" stroke="#3a1210" stroke-width="0.3" />
<rect x="100.60" y="363.40" width="31.00" height="5.60" fill="#140c0a" stroke="none" stroke-width="0.5" />
<path d="M100.80 320.40L131.90 306.80L147.00 314.60" stroke="#140e0c" stroke-width="2.7" fill="none" stroke-linejoin="miter"/>
<path d="M100.80 320.85L131.90 307.25L147.00 315.05" stroke="#c8b09c" stroke-width="0.4" fill="none" />
<path d="M78.80 336.60L108.20 325.00" stroke="#140e0c" stroke-width="2.7" fill="none" stroke-linejoin="miter"/>
<path d="M78.80 337.05L108.20 325.45" stroke="#c8b09c" stroke-width="0.4" fill="none" />
<path d="M126.40 324.20L146.00 315.00L172.20 326.00" stroke="#140e0c" stroke-width="2.7" fill="none" stroke-linejoin="miter"/>
<path d="M126.40 324.65L146.00 315.45L172.20 326.45" stroke="#c8b09c" stroke-width="0.4" fill="none" />
<rect x="112.80" y="302.80" width="5.60" height="12.60" fill="#2a1a14" stroke="none" stroke-width="0.5" />
<rect x="112.00" y="300.80" width="7.20" height="2.20" fill="#140c0a" stroke="none" stroke-width="0.5" />
<path d="M113.60 306.50L117.80 306.50" stroke="#6a4a3a" stroke-width="0.4" />
<path d="M113.60 308.50L117.80 308.50" stroke="#6a4a3a" stroke-width="0.4" />
<path d="M113.60 311.50L117.80 311.50" stroke="#6a4a3a" stroke-width="0.4" />
<path d="M75.60 369.50L198.60 369.50" stroke="#0c0c0c" stroke-width="1" />
<path d="M87.50 369.00L87.50 391.40" stroke="#e01818" stroke-width="0.75" />
<path d="M108.50 369.00L108.50 391.40" stroke="#e01818" stroke-width="0.75" />
<path d="M132.50 369.00L132.50 391.40" stroke="#e01818" stroke-width="0.75" />
<path d="M164.50 369.00L164.50 391.40" stroke="#e01818" stroke-width="0.75" />
<path d="M85.80 381.50L166.10 381.50" stroke="#222" stroke-width="0.55" />
<path d="M85.80 387.50L166.10 387.50" stroke="#222" stroke-width="0.55" />
<text x="101.00" y="380.60" font-size="4.3" text-anchor="middle" font-weight="bold" fill="#222" font-style="italic">2100</text>
<text x="123.85" y="380.60" font-size="4.3" text-anchor="middle" font-weight="bold" fill="#222" font-style="italic">2700</text>
<text x="152.10" y="380.60" font-size="4.3" text-anchor="middle" font-weight="bold" fill="#222" font-style="italic">3500</text>
<text x="123.75" y="386.40" font-size="4.3" text-anchor="middle" font-weight="bold" fill="#222" font-style="italic">9700</text>
<circle cx="87.00" cy="395.40" r="4.0" fill="#fff" stroke="#111" stroke-width="0.9"/>
<text x="87.00" y="397.10" font-size="4.8" text-anchor="middle" font-weight="bold" fill="#111" stroke="#111" stroke-width="0.25">4</text>
<circle cx="108.40" cy="395.40" r="4.0" fill="#fff" stroke="#111" stroke-width="0.9"/>
<text x="108.40" y="397.10" font-size="4.8" text-anchor="middle" font-weight="bold" fill="#111" stroke="#111" stroke-width="0.25">3</text>
<circle cx="132.70" cy="395.40" r="4.0" fill="#fff" stroke="#111" stroke-width="0.9"/>
<text x="132.70" y="397.10" font-size="4.8" text-anchor="middle" font-weight="bold" fill="#111" stroke="#111" stroke-width="0.25">2</text>
<circle cx="164.90" cy="395.40" r="4.0" fill="#fff" stroke="#111" stroke-width="0.9"/>
<text x="164.90" y="397.10" font-size="4.8" text-anchor="middle" font-weight="bold" fill="#111" stroke="#111" stroke-width="0.25">1</text>
<path d="M86.10 382.40L87.90 380.60" stroke="#222" stroke-width="0.5" />
<path d="M107.50 382.40L109.30 380.60" stroke="#222" stroke-width="0.5" />
<path d="M131.80 382.40L133.60 380.60" stroke="#222" stroke-width="0.5" />
<path d="M164.00 382.40L165.80 380.60" stroke="#222" stroke-width="0.5" />
<path d="M86.10 388.20L87.90 386.40" stroke="#222" stroke-width="0.5" />
<path d="M164.00 388.20L165.80 386.40" stroke="#222" stroke-width="0.5" />
<text x="50.00" y="297.50" font-size="4.5" font-weight="bold" fill="#000" stroke="#000" stroke-width="0.22" textLength="13.20" lengthAdjust="spacingAndGlyphs">+7.030</text>
<path d="M49.80 298.50L63.80 298.50" stroke="#111" stroke-width="0.6" />
<path d="M63.60 298.00L65.20 300.20" stroke="#111" stroke-width="0.6" fill="none" />
<path d="M64.00 300.30L66.20 300.30" stroke="#111" stroke-width="0.5" fill="none" />
<text x="50.00" y="303.10" font-size="4.5" font-weight="bold" fill="#000" stroke="#000" stroke-width="0.22" textLength="13.20" lengthAdjust="spacingAndGlyphs">+6.530</text>
<path d="M49.80 303.50L63.80 303.50" stroke="#111" stroke-width="0.6" />
<path d="M63.60 303.60L65.20 305.80" stroke="#111" stroke-width="0.6" fill="none" />
<path d="M64.00 305.90L66.20 305.90" stroke="#111" stroke-width="0.5" fill="none" />
<text x="50.00" y="321.90" font-size="4.5" font-weight="bold" fill="#000" stroke="#000" stroke-width="0.22" textLength="13.20" lengthAdjust="spacingAndGlyphs">+4.400</text>
<path d="M49.80 322.50L63.80 322.50" stroke="#111" stroke-width="0.6" />
<path d="M63.60 322.40L65.20 324.60" stroke="#111" stroke-width="0.6" fill="none" />
<path d="M64.00 324.70L66.20 324.70" stroke="#111" stroke-width="0.5" fill="none" />
<text x="50.00" y="332.90" font-size="4.5" font-weight="bold" fill="#000" stroke="#000" stroke-width="0.22" textLength="13.20" lengthAdjust="spacingAndGlyphs">+3.300</text>
<path d="M49.80 333.50L63.80 333.50" stroke="#111" stroke-width="0.6" />
<path d="M63.60 333.40L65.20 335.60" stroke="#111" stroke-width="0.6" fill="none" />
<path d="M64.00 335.70L66.20 335.70" stroke="#111" stroke-width="0.5" fill="none" />
<text x="50.00" y="359.30" font-size="4.5" font-weight="bold" fill="#000" stroke="#000" stroke-width="0.22" textLength="10.20" lengthAdjust="spacingAndGlyphs">0.000</text>
<path d="M49.80 359.50L60.80 359.50" stroke="#111" stroke-width="0.6" />
<path d="M60.60 359.80L62.20 362.00" stroke="#111" stroke-width="0.6" fill="none" />
<path d="M61.00 362.10L63.20 362.10" stroke="#111" stroke-width="0.5" fill="none" />
<rect x="263.00" y="325.00" width="56.60" height="40.00" fill="url(#logs)" stroke="#3a1a10" stroke-width="0.4" />
<rect x="244.10" y="329.60" width="19.00" height="35.40" fill="url(#logs)" stroke="#3a1a10" stroke-width="0.3" />
<rect x="244.10" y="325.00" width="19.00" height="7.00" fill="#5a2412" stroke="none" stroke-width="0.5" />
<rect x="246.00" y="327.00" width="16.40" height="3.80" fill="#fff" stroke="none" stroke-width="0.5" />
<rect x="244.10" y="332.40" width="18.60" height="5.20" fill="#3a2a20" stroke="none" stroke-width="0.5" />
<rect x="247.00" y="333.40" width="1.20" height="3.20" fill="#f0ece4" stroke="none" stroke-width="0.5" />
<rect x="249.40" y="333.40" width="1.20" height="3.20" fill="#f0ece4" stroke="none" stroke-width="0.5" />
<rect x="252.00" y="333.40" width="1.20" height="3.20" fill="#f0ece4" stroke="none" stroke-width="0.5" />
<rect x="254.60" y="333.40" width="1.20" height="3.20" fill="#f0ece4" stroke="none" stroke-width="0.5" />
<rect x="257.00" y="333.40" width="1.20" height="3.20" fill="#f0ece4" stroke="none" stroke-width="0.5" />
<rect x="259.40" y="333.40" width="1.20" height="3.20" fill="#f0ece4" stroke="none" stroke-width="0.5" />
<rect x="246.40" y="345.80" width="6.80" height="10.60" fill="#fff" stroke="#3a1c12" stroke-width="0.9" />
<rect x="255.60" y="345.80" width="6.20" height="10.60" fill="#fff" stroke="#3a1c12" stroke-width="0.9" />
<rect x="265.00" y="345.80" width="4.80" height="10.60" fill="#fff" stroke="#3a1c12" stroke-width="0.9" />
<rect x="244.10" y="329.60" width="1.50" height="35.40" fill="#5a2412" stroke="none" stroke-width="0.5" />
<rect x="254.00" y="337.60" width="1.20" height="27.40" fill="#5a2412" stroke="none" stroke-width="0.5" />
<rect x="262.60" y="325.00" width="1.50" height="40.00" fill="#5a2412" stroke="none" stroke-width="0.5" />
<rect x="319.60" y="326.00" width="9.40" height="39.00" fill="#5a2412" stroke="none" stroke-width="0.5" />
<rect x="321.60" y="329.40" width="3.20" height="30.00" fill="#fff" stroke="none" stroke-width="0.5" />
<rect x="325.80" y="329.40" width="2.40" height="30.00" fill="#fff" stroke="none" stroke-width="0.5" />
<path d="M321.60 340.50L328.20 340.50" stroke="#5a2412" stroke-width="0.6" />
<path d="M321.60 350.50L328.20 350.50" stroke="#5a2412" stroke-width="0.6" />
<rect x="292.80" y="345.40" width="10.60" height="11.00" fill="#fff" stroke="#3a1c12" stroke-width="0.9" />
<path d="M257.40 306.10L334.60 306.10L334.60 317.90L326.30 325.00L257.40 325.00z" stroke="#3a140a" stroke-width="0.5" fill="url(#roofv)" />
<path d="M238.90 313.60L257.40 313.60L257.40 325.30L239.40 325.30z" stroke="#3a140a" stroke-width="0.5" fill="url(#roofv)" />
<path d="M257.40 306.50L334.60 306.50" stroke="#1a0c08" stroke-width="1" />
<path d="M238.90 313.50L257.40 313.50" stroke="#1a0c08" stroke-width="0.9" />
<path d="M239.40 325.40L326.30 325.20" stroke="#1a0c08" stroke-width="1.1" />
<path d="M334.60 317.60L326.00 325.20" stroke="#1a0c08" stroke-width="1.4" fill="none" />
<rect x="274.60" y="322.40" width="14.00" height="10.20" fill="#5a2412" stroke="none" stroke-width="0.5" />
<path d="M273.00 323.40L281.40 313.20L290.80 323.40z" stroke="#140e0c" stroke-width="1.6" fill="#3a1c12" />
<rect x="276.60" y="323.60" width="10.20" height="7.40" fill="#fff" stroke="#3a1c12" stroke-width="0.9" />
<path d="M278.20 321.60L281.40 317.40L284.80 321.60z" stroke="#2a1a14" stroke-width="0.4" fill="#fff" />
<path d="M281.50 317.60L281.50 321.60" stroke="#2a1a14" stroke-width="0.5" />
<rect x="272.60" y="302.00" width="6.40" height="4.20" fill="#3a2218" stroke="#1c1412" stroke-width="0.4" />
<rect x="271.80" y="300.80" width="8.00" height="1.60" fill="#1c1412" stroke="none" stroke-width="0.5" />
<rect x="244.10" y="365.00" width="85.00" height="4.30" fill="url(#plinth)" stroke="#3a1210" stroke-width="0.3" />
<path d="M220.60 369.50L355.60 369.50" stroke="#0c0c0c" stroke-width="1" />
<path d="M244.50 369.30L244.50 390.00" stroke="#e01818" stroke-width="0.75" />
<path d="M270.50 369.30L270.50 390.00" stroke="#e01818" stroke-width="0.75" />
<path d="M318.50 369.30L318.50 390.00" stroke="#e01818" stroke-width="0.75" />
<path d="M327.50 369.30L327.50 390.00" stroke="#e01818" stroke-width="0.75" />
<path d="M243.60 379.50L329.00 379.50" stroke="#222" stroke-width="0.55" />
<path d="M243.60 386.50L329.00 386.50" stroke="#222" stroke-width="0.55" />
<text x="257.60" y="378.10" font-size="4.3" text-anchor="middle" font-weight="bold" fill="#222" font-style="italic">2600</text>
<text x="294.45" y="378.10" font-size="4.3" text-anchor="middle" font-weight="bold" fill="#222" font-style="italic">6400</text>
<text x="323.15" y="378.10" font-size="4.3" text-anchor="middle" font-weight="bold" fill="#222" font-style="italic">1000</text>
<text x="294.10" y="385.30" font-size="4.3" text-anchor="middle" font-weight="bold" fill="#222" font-style="italic">10000</text>
<circle cx="244.80" cy="394.00" r="4.0" fill="#fff" stroke="#111" stroke-width="0.9"/>
<text x="244.80" y="395.70" font-size="4.8" text-anchor="middle" font-weight="bold" fill="#111" stroke="#111" stroke-width="0.25">Д</text>
<circle cx="270.40" cy="394.00" r="4.0" fill="#fff" stroke="#111" stroke-width="0.9"/>
<text x="270.40" y="395.70" font-size="4.8" text-anchor="middle" font-weight="bold" fill="#111" stroke="#111" stroke-width="0.25">В</text>
<circle cx="318.50" cy="394.00" r="4.0" fill="#fff" stroke="#111" stroke-width="0.9"/>
<text x="318.50" y="395.70" font-size="4.8" text-anchor="middle" font-weight="bold" fill="#111" stroke="#111" stroke-width="0.25">Б</text>
<circle cx="327.80" cy="394.00" r="4.0" fill="#fff" stroke="#111" stroke-width="0.9"/>
<text x="327.80" y="395.70" font-size="4.8" text-anchor="middle" font-weight="bold" fill="#111" stroke="#111" stroke-width="0.25">А</text>
<path d="M243.90 379.90L245.70 378.10" stroke="#222" stroke-width="0.5" />
<path d="M269.50 379.90L271.30 378.10" stroke="#222" stroke-width="0.5" />
<path d="M317.60 379.90L319.40 378.10" stroke="#222" stroke-width="0.5" />
<path d="M326.90 379.90L328.70 378.10" stroke="#222" stroke-width="0.5" />
<path d="M243.90 387.10L245.70 385.30" stroke="#222" stroke-width="0.5" />
<path d="M326.90 387.10L328.70 385.30" stroke="#222" stroke-width="0.5" />
<text x="187.40" y="310.70" font-size="4.5" font-weight="bold" fill="#000" stroke="#000" stroke-width="0.22" textLength="12.20" lengthAdjust="spacingAndGlyphs">+6.400</text>
<path d="M187.20 311.50L200.20 311.50" stroke="#111" stroke-width="0.6" />
<path d="M187.40 311.20L185.80 313.40" stroke="#111" stroke-width="0.6" fill="none" />
<path d="M184.80 313.50L187.00 313.50" stroke="#111" stroke-width="0.5" fill="none" />
<text x="187.40" y="320.50" font-size="4.5" font-weight="bold" fill="#000" stroke="#000" stroke-width="0.22" textLength="12.20" lengthAdjust="spacingAndGlyphs">+4.600</text>
<path d="M187.20 321.50L200.20 321.50" stroke="#111" stroke-width="0.6" />
<path d="M187.40 321.00L185.80 323.20" stroke="#111" stroke-width="0.6" fill="none" />
<path d="M184.80 323.30L187.00 323.30" stroke="#111" stroke-width="0.5" fill="none" />
<text x="187.40" y="326.50" font-size="4.5" font-weight="bold" fill="#000" stroke="#000" stroke-width="0.22" textLength="12.20" lengthAdjust="spacingAndGlyphs">+3.490</text>
<path d="M187.20 327.50L200.20 327.50" stroke="#111" stroke-width="0.6" />
<path d="M187.40 327.00L185.80 329.20" stroke="#111" stroke-width="0.6" fill="none" />
<path d="M184.80 329.30L187.00 329.30" stroke="#111" stroke-width="0.5" fill="none" />
<text x="187.40" y="333.50" font-size="4.5" font-weight="bold" fill="#000" stroke="#000" stroke-width="0.22" textLength="12.20" lengthAdjust="spacingAndGlyphs">+3.300</text>
<path d="M187.20 334.50L200.20 334.50" stroke="#111" stroke-width="0.6" />
<path d="M187.40 334.00L185.80 336.20" stroke="#111" stroke-width="0.6" fill="none" />
<path d="M184.80 336.30L187.00 336.30" stroke="#111" stroke-width="0.5" fill="none" />
<text x="187.40" y="353.50" font-size="4.5" font-weight="bold" fill="#000" stroke="#000" stroke-width="0.22" textLength="12.20" lengthAdjust="spacingAndGlyphs">+0.500</text>
<path d="M187.20 354.50L200.20 354.50" stroke="#111" stroke-width="0.6" />
<path d="M187.40 354.00L185.80 356.20" stroke="#111" stroke-width="0.6" fill="none" />
<path d="M184.80 356.30L187.00 356.30" stroke="#111" stroke-width="0.5" fill="none" />
<text x="209.40" y="310.70" font-size="4.5" font-weight="bold" fill="#000" stroke="#000" stroke-width="0.22" textLength="12.20" lengthAdjust="spacingAndGlyphs">+6.400</text>
<path d="M209.20 311.50L222.20 311.50" stroke="#111" stroke-width="0.6" />
<path d="M222.00 311.20L223.60 313.40" stroke="#111" stroke-width="0.6" fill="none" />
<path d="M222.40 313.50L224.60 313.50" stroke="#111" stroke-width="0.5" fill="none" />
<text x="209.40" y="320.50" font-size="4.5" font-weight="bold" fill="#000" stroke="#000" stroke-width="0.22" textLength="12.20" lengthAdjust="spacingAndGlyphs">+4.600</text>
<path d="M209.20 321.50L222.20 321.50" stroke="#111" stroke-width="0.6" />
<path d="M222.00 321.00L223.60 323.20" stroke="#111" stroke-width="0.6" fill="none" />
<path d="M222.40 323.30L224.60 323.30" stroke="#111" stroke-width="0.5" fill="none" />
<text x="209.40" y="326.50" font-size="4.5" font-weight="bold" fill="#000" stroke="#000" stroke-width="0.22" textLength="12.20" lengthAdjust="spacingAndGlyphs">+3.490</text>
<path d="M209.20 327.50L222.20 327.50" stroke="#111" stroke-width="0.6" />
<path d="M222.00 327.00L223.60 329.20" stroke="#111" stroke-width="0.6" fill="none" />
<path d="M222.40 329.30L224.60 329.30" stroke="#111" stroke-width="0.5" fill="none" />
<text x="209.40" y="333.50" font-size="4.5" font-weight="bold" fill="#000" stroke="#000" stroke-width="0.22" textLength="12.20" lengthAdjust="spacingAndGlyphs">+3.300</text>
<path d="M209.20 334.50L222.20 334.50" stroke="#111" stroke-width="0.6" />
<path d="M222.00 334.00L223.60 336.20" stroke="#111" stroke-width="0.6" fill="none" />
<path d="M222.40 336.30L224.60 336.30" stroke="#111" stroke-width="0.5" fill="none" />
<text x="209.40" y="353.50" font-size="4.5" font-weight="bold" fill="#000" stroke="#000" stroke-width="0.22" textLength="12.20" lengthAdjust="spacingAndGlyphs">+0.500</text>
<path d="M209.20 354.50L222.20 354.50" stroke="#111" stroke-width="0.6" />
<path d="M222.00 354.00L223.60 356.20" stroke="#111" stroke-width="0.6" fill="none" />
<path d="M222.40 356.30L224.60 356.30" stroke="#111" stroke-width="0.5" fill="none" />
<text x="209.40" y="359.70" font-size="4.5" font-weight="bold" fill="#000" stroke="#000" stroke-width="0.22" textLength="10.20" lengthAdjust="spacingAndGlyphs">0.000</text>
<path d="M209.20 360.50L220.20 360.50" stroke="#111" stroke-width="0.6" />
<path d="M220.00 360.20L221.60 362.40" stroke="#111" stroke-width="0.6" fill="none" />
<path d="M220.40 362.50L222.60 362.50" stroke="#111" stroke-width="0.5" fill="none" />
<text x="349.40" y="297.30" font-size="4.5" font-weight="bold" fill="#000" stroke="#000" stroke-width="0.22" textLength="13.20" lengthAdjust="spacingAndGlyphs">+7.030</text>
<path d="M349.20 297.50L363.20 297.50" stroke="#111" stroke-width="0.6" />
<path d="M349.40 297.80L347.80 300.00" stroke="#111" stroke-width="0.6" fill="none" />
<path d="M346.80 300.10L349.00 300.10" stroke="#111" stroke-width="0.5" fill="none" />
<text x="349.40" y="302.50" font-size="4.5" font-weight="bold" fill="#000" stroke="#000" stroke-width="0.22" textLength="13.20" lengthAdjust="spacingAndGlyphs">+6.530</text>
<path d="M349.20 303.50L363.20 303.50" stroke="#111" stroke-width="0.6" />
<path d="M349.40 303.00L347.80 305.20" stroke="#111" stroke-width="0.6" fill="none" />
<path d="M346.80 305.30L349.00 305.30" stroke="#111" stroke-width="0.5" fill="none" />
<text x="349.40" y="314.90" font-size="4.5" font-weight="bold" fill="#000" stroke="#000" stroke-width="0.22" textLength="13.20" lengthAdjust="spacingAndGlyphs">+5.030</text>
<path d="M349.20 315.50L363.20 315.50" stroke="#111" stroke-width="0.6" />
<path d="M349.40 315.40L347.80 317.60" stroke="#111" stroke-width="0.6" fill="none" />
<path d="M346.80 317.70L349.00 317.70" stroke="#111" stroke-width="0.5" fill="none" />
<text x="349.40" y="355.70" font-size="4.5" font-weight="bold" fill="#000" stroke="#000" stroke-width="0.22" textLength="13.20" lengthAdjust="spacingAndGlyphs">+0.430</text>
<path d="M349.20 356.50L363.20 356.50" stroke="#111" stroke-width="0.6" />
<path d="M349.40 356.20L347.80 358.40" stroke="#111" stroke-width="0.6" fill="none" />
<path d="M346.80 358.50L349.00 358.50" stroke="#111" stroke-width="0.5" fill="none" />
<path d="M87.40 444.50L164.50 444.50" stroke="#141418" stroke-width="0.9" />
<path d="M87.40 447.50L164.50 447.50" stroke="#141418" stroke-width="0.9" />
<path d="M87.40 470.50L164.50 470.50" stroke="#141418" stroke-width="0.9" />
<path d="M85.00 472.50L167.00 472.50" stroke="#141418" stroke-width="0.7" />
<path d="M108.70 424.00L133.00 413.70" stroke="#141418" stroke-width="0.5" />
<rect x="115.90" y="426.60" width="13.00" height="16.80" fill="#fff" stroke="#141418" stroke-width="1.2" />
<path d="M122.50 426.60L122.50 443.40" stroke="#141418" stroke-width="1.1" />
<path d="M115.90 437.50L128.90 437.50" stroke="#141418" stroke-width="0.9" />
<rect x="122.30" y="451.60" width="6.60" height="17.60" fill="#fff" stroke="#141418" stroke-width="1.2" />
<path d="M122.30 457.50L128.90 457.50" stroke="#141418" stroke-width="0.7" />
<path d="M122.30 463.50L128.90 463.50" stroke="#141418" stroke-width="0.7" />
<path d="M135.50 424.69L135.50 444.00" stroke="#141418" stroke-width="0.8" />
<path d="M137.50 425.42L137.50 444.00" stroke="#141418" stroke-width="0.8" />
<path d="M139.50 426.44L139.50 444.00" stroke="#141418" stroke-width="0.8" />
<path d="M141.50 427.17L141.50 444.00" stroke="#141418" stroke-width="0.8" />
<path d="M143.60 444.00L143.60 423.00L143.60 427.20L155.20 433.20L155.20 444.00" stroke="#141418" stroke-width="0.8" fill="none" />
<path d="M142.50 418.60L142.50 444.00" stroke="#141418" stroke-width="0.5" />
<path d="M143.60 431.50L155.20 431.50" stroke="#141418" stroke-width="0.5" />
<path d="M143.60 437.50L155.20 437.50" stroke="#141418" stroke-width="0.5" />
<path d="M147.50 429.40L147.50 444.00" stroke="#141418" stroke-width="0.5" />
<path d="M151.50 429.40L151.50 444.00" stroke="#141418" stroke-width="0.5" />
<path d="M157.50 433.48L157.50 444.00" stroke="#141418" stroke-width="0.7" />
<path d="M159.50 434.20L159.50 444.00" stroke="#141418" stroke-width="0.7" />
<path d="M161.50 435.16L161.50 444.00" stroke="#141418" stroke-width="0.7" />
<path d="M163.50 435.80L163.50 444.00" stroke="#141418" stroke-width="0.7" />
<path d="M157.20 438.50L163.00 438.50" stroke="#141418" stroke-width="0.5" />
<path d="M135.50 447.10L135.50 464.60" stroke="#141418" stroke-width="0.8" />
<path d="M137.50 447.10L137.50 464.60" stroke="#141418" stroke-width="0.8" />
<path d="M139.50 447.10L139.50 464.60" stroke="#141418" stroke-width="0.8" />
<path d="M141.50 447.10L141.50 464.60" stroke="#141418" stroke-width="0.8" />
<path d="M135.00 464.50L142.40 464.50" stroke="#141418" stroke-width="0.7" />
<path d="M135.80 455.50L141.20 455.50" stroke="#141418" stroke-width="0.5" />
<path d="M143.60 447.10L143.60 465.40L153.00 465.40" stroke="#141418" stroke-width="0.6" fill="none" />
<path d="M157.50 447.10L157.50 466.00" stroke="#141418" stroke-width="0.6" />
<path d="M159.50 447.10L159.50 466.00" stroke="#141418" stroke-width="0.6" />
<path d="M161.50 447.10L161.50 466.00" stroke="#141418" stroke-width="0.6" />
<path d="M163.50 447.10L163.50 466.00" stroke="#141418" stroke-width="0.6" />
<path d="M134.40 448.20L136.50 448.20L136.50 449.65L138.60 449.65L138.60 451.10L140.70 451.10L140.70 452.55L142.80 452.55L142.80 454.00L144.90 454.00L144.90 455.45L147.00 455.45L147.00 456.90L149.10 456.90L149.10 458.35L151.20 458.35L151.20 459.80L153.30 459.80L153.30 461.25L155.40 461.25L155.40 462.70L157.50 462.70L157.50 464.15L159.60 464.15L159.60 465.60L161.70 465.60L161.70 467.05" stroke="#141418" stroke-width="1" fill="none" />
<path d="M134.00 447.60L141.00 447.60L141.00 451.60L147.00 451.60L147.00 456.00" stroke="#141418" stroke-width="1.1" fill="none" />
<path d="M152.40 455.40L163.60 468.80L156.00 468.80L156.00 462.60z" stroke="#141418" stroke-width="0.5" fill="#141418" />
<path d="M146.50 450.00L146.50 456.50" stroke="#141418" stroke-width="0.6" />
<path d="M148.50 451.45L148.50 457.95" stroke="#141418" stroke-width="0.6" />
<path d="M150.50 452.90L150.50 459.40" stroke="#141418" stroke-width="0.6" />
<path d="M152.50 454.35L152.50 460.85" stroke="#141418" stroke-width="0.6" />
<path d="M154.50 455.80L154.50 462.30" stroke="#141418" stroke-width="0.6" />
<path d="M156.50 457.25L156.50 463.75" stroke="#141418" stroke-width="0.6" />
<path d="M145.00 449.00L158.00 458.00" stroke="#141418" stroke-width="0.7" fill="none" />
<rect x="156.40" y="466.40" width="8.00" height="3.60" fill="#141418" stroke="none" stroke-width="0.5" />
<path d="M100.00 438.40L101.40 440.20L104.00 441.00L108.00 441.00" stroke="#141418" stroke-width="1.3" fill="none" />
<path d="M100.00 448.00L101.40 450.40L104.00 451.60L108.00 451.60" stroke="#141418" stroke-width="1.3" fill="none" />
<text x="102.00" y="439.00" font-size="2.6" text-anchor="start" font-weight="bold" fill="#111" >2.75</text>
<text x="102.00" y="450.40" font-size="2.6" text-anchor="start" font-weight="bold" fill="#111" >2.75</text>
<text x="102.00" y="464.20" font-size="2.6" text-anchor="start" font-weight="bold" fill="#111" >0.05</text>
<rect x="101.00" y="464.80" width="6.40" height="4.60" fill="none" stroke="#141418" stroke-width="0.7" />
<path d="M100.00 464.50L108.00 464.50" stroke="#141418" stroke-width="0.8" />
<path d="M103.40 423.40L132.90 411.60L172.60 430.60" stroke="#141418" stroke-width="1.7" fill="none" />
<path d="M104.40 425.40L132.90 414.00L171.40 432.40" stroke="#141418" stroke-width="0.6" fill="none" />
<path d="M103.20 422.60L104.60 426.00" stroke="#141418" stroke-width="0.6" fill="none" />
<path d="M172.80 429.80L171.20 433.00" stroke="#141418" stroke-width="0.6" fill="none" />
<path d="M80.80 442.20L107.20 431.40" stroke="#141418" stroke-width="1.7" fill="none" />
<path d="M81.80 444.00L107.20 433.60" stroke="#141418" stroke-width="0.6" fill="none" />
<path d="M87.20 441.00L87.20 476.60" stroke="#7e1c1c" stroke-width="2" />
<path d="M108.60 424.40L108.60 476.60" stroke="#7e1c1c" stroke-width="2" />
<path d="M132.90 413.40L132.90 476.60" stroke="#7e1c1c" stroke-width="2" />
<path d="M164.40 430.40L164.40 476.60" stroke="#7e1c1c" stroke-width="2" />
<rect x="111.00" y="408.80" width="6.20" height="12.00" fill="#fff" stroke="#141418" stroke-width="0.8" />
<rect x="110.20" y="406.80" width="7.80" height="2.20" fill="#fff" stroke="#141418" stroke-width="0.8" />
<path d="M60.00 469.80L73.00 469.80L73.00 474.40L182.40 474.40" stroke="#141418" stroke-width="0.9" fill="none" />
<path d="M87.50 476.60L87.50 496.40" stroke="#e01818" stroke-width="0.75" />
<path d="M108.50 476.60L108.50 496.40" stroke="#e01818" stroke-width="0.75" />
<path d="M132.50 476.60L132.50 496.40" stroke="#e01818" stroke-width="0.75" />
<path d="M164.50 476.60L164.50 496.40" stroke="#e01818" stroke-width="0.75" />
<path d="M86.00 485.50L165.60 485.50" stroke="#222" stroke-width="0.55" />
<path d="M86.00 492.50L165.60 492.50" stroke="#222" stroke-width="0.55" />
<text x="101.90" y="484.50" font-size="4.3" text-anchor="middle" font-weight="bold" fill="#222" font-style="italic">2400</text>
<text x="124.75" y="484.50" font-size="4.3" text-anchor="middle" font-weight="bold" fill="#222" font-style="italic">2700</text>
<text x="152.65" y="484.50" font-size="4.3" text-anchor="middle" font-weight="bold" fill="#222" font-style="italic">3500</text>
<text x="124.10" y="491.20" font-size="4.3" text-anchor="middle" font-weight="bold" fill="#222" font-style="italic">9700</text>
<circle cx="87.20" cy="500.40" r="4.0" fill="#fff" stroke="#111" stroke-width="0.9"/>
<text x="87.20" y="502.10" font-size="4.8" text-anchor="middle" font-weight="bold" fill="#111" stroke="#111" stroke-width="0.25">4</text>
<circle cx="108.60" cy="500.40" r="4.0" fill="#fff" stroke="#111" stroke-width="0.9"/>
<text x="108.60" y="502.10" font-size="4.8" text-anchor="middle" font-weight="bold" fill="#111" stroke="#111" stroke-width="0.25">3</text>
<circle cx="132.90" cy="500.40" r="4.0" fill="#fff" stroke="#111" stroke-width="0.9"/>
<text x="132.90" y="502.10" font-size="4.8" text-anchor="middle" font-weight="bold" fill="#111" stroke="#111" stroke-width="0.25">2</text>
<circle cx="164.40" cy="500.40" r="4.0" fill="#fff" stroke="#111" stroke-width="0.9"/>
<text x="164.40" y="502.10" font-size="4.8" text-anchor="middle" font-weight="bold" fill="#111" stroke="#111" stroke-width="0.25">1</text>
<path d="M86.30 486.30L88.10 484.50" stroke="#222" stroke-width="0.5" />
<path d="M107.70 486.30L109.50 484.50" stroke="#222" stroke-width="0.5" />
<path d="M132.00 486.30L133.80 484.50" stroke="#222" stroke-width="0.5" />
<path d="M163.50 486.30L165.30 484.50" stroke="#222" stroke-width="0.5" />
<path d="M86.30 493.00L88.10 491.20" stroke="#222" stroke-width="0.5" />
<path d="M163.50 493.00L165.30 491.20" stroke="#222" stroke-width="0.5" />
<text x="59.60" y="403.90" font-size="4.5" font-weight="bold" fill="#000" stroke="#000" stroke-width="0.22" textLength="13.20" lengthAdjust="spacingAndGlyphs">+7.613</text>
<path d="M59.40 404.50L73.40 404.50" stroke="#111" stroke-width="0.6" />
<path d="M73.20 404.40L74.80 406.60" stroke="#111" stroke-width="0.6" fill="none" />
<path d="M73.60 406.70L75.80 406.70" stroke="#111" stroke-width="0.5" fill="none" />
<text x="59.60" y="420.70" font-size="4.5" font-weight="bold" fill="#000" stroke="#000" stroke-width="0.22" textLength="13.20" lengthAdjust="spacingAndGlyphs">+4.730</text>
<path d="M59.40 421.50L73.40 421.50" stroke="#111" stroke-width="0.6" />
<path d="M73.20 421.20L74.80 423.40" stroke="#111" stroke-width="0.6" fill="none" />
<path d="M73.60 423.50L75.80 423.50" stroke="#111" stroke-width="0.5" fill="none" />
<text x="59.60" y="427.70" font-size="4.5" font-weight="bold" fill="#000" stroke="#000" stroke-width="0.22" textLength="13.20" lengthAdjust="spacingAndGlyphs">+4.400</text>
<path d="M59.40 428.50L73.40 428.50" stroke="#111" stroke-width="0.6" />
<path d="M73.20 428.20L74.80 430.40" stroke="#111" stroke-width="0.6" fill="none" />
<path d="M73.60 430.50L75.80 430.50" stroke="#111" stroke-width="0.5" fill="none" />
<text x="59.60" y="437.10" font-size="4.5" font-weight="bold" fill="#000" stroke="#000" stroke-width="0.22" textLength="13.20" lengthAdjust="spacingAndGlyphs">+3.130</text>
<path d="M59.40 437.50L73.40 437.50" stroke="#111" stroke-width="0.6" />
<path d="M73.20 437.60L74.80 439.80" stroke="#111" stroke-width="0.6" fill="none" />
<path d="M73.60 439.90L75.80 439.90" stroke="#111" stroke-width="0.5" fill="none" />
<text x="61.00" y="468.60" font-size="4.3" text-anchor="start" font-weight="bold" fill="#111" stroke="#000" stroke-width="0.2">-0.600</text>
<text x="183.40" y="408.10" font-size="4.5" font-weight="bold" fill="#000" stroke="#000" stroke-width="0.22" textLength="13.20" lengthAdjust="spacingAndGlyphs">+6.150</text>
<path d="M183.20 408.50L197.20 408.50" stroke="#111" stroke-width="0.6" />
<path d="M183.40 408.60L181.80 410.80" stroke="#111" stroke-width="0.6" fill="none" />
<path d="M180.80 410.90L183.00 410.90" stroke="#111" stroke-width="0.5" fill="none" />
<text x="183.40" y="426.70" font-size="4.5" font-weight="bold" fill="#000" stroke="#000" stroke-width="0.22" textLength="13.20" lengthAdjust="spacingAndGlyphs">+4.480</text>
<path d="M183.20 427.50L197.20 427.50" stroke="#111" stroke-width="0.6" />
<path d="M183.40 427.20L181.80 429.40" stroke="#111" stroke-width="0.6" fill="none" />
<path d="M180.80 429.50L183.00 429.50" stroke="#111" stroke-width="0.5" fill="none" />
<path d="M29.40 446.00L34.00 451.80L38.80 446.00" stroke="#2a2a2a" stroke-width="0.8" fill="none" />
<path d="M34.00 451.80L34.00 457.00" stroke="#2a2a2a" stroke-width="0.8" fill="none" />
<path d="M33.00 465.00L29.20 476.00L36.80 476.00z" stroke="#2a2a2a" stroke-width="0.8" fill="#fff" />
<path d="M33.00 468.40L31.00 476.00L35.00 476.00z" stroke="#2a2a2a" stroke-width="0.4" fill="none" />
<path d="M33.00 476.00L33.00 516.60" stroke="#2a2a2a" stroke-width="0.8" fill="none" />
<rect x="28.40" y="516.80" width="9.40" height="9.00" fill="#fff" stroke="#2a2a2a" stroke-width="0.8" />
<path d="M37.80 521.30L78.00 521.30" stroke="#2a2a2a" stroke-width="0.8" fill="none" />
<path d="M88.40 521.30L78.00 517.40L78.00 525.20z" stroke="#2a2a2a" stroke-width="0.8" fill="#fff" />
<path d="M85.00 521.30L78.00 519.20L78.00 523.40z" stroke="#2a2a2a" stroke-width="0.4" fill="none" />
<path d="M98.40 515.80L107.00 525.80" stroke="#2a2a2a" stroke-width="0.8" fill="none" />
<path d="M107.00 515.80L98.40 525.80" stroke="#2a2a2a" stroke-width="0.8" fill="none" />
<path d="M376.40 365.50L414.80 365.50" stroke="#4a4a4a" stroke-width="0.9" />
<path d="M396.50 346.60L396.50 384.80" stroke="#4a4a4a" stroke-width="0.9" />
<rect x="394.40" y="363.50" width="3.60" height="3.60" fill="#fff" stroke="#4a4a4a" stroke-width="0.8" />
<path d="M443.00 222.50L497.00 222.50" stroke="#e01818" stroke-width="0.7" />
<path d="M443.00 242.50L552.60 242.50" stroke="#e01818" stroke-width="0.7" />
<path d="M443.00 250.50L497.00 250.50" stroke="#e01818" stroke-width="0.7" />
<path d="M443.00 297.50L552.60 297.50" stroke="#e01818" stroke-width="0.7" />
<path d="M443.00 306.50L544.00 306.50" stroke="#e01818" stroke-width="0.7" />
<path d="M465.50 222.00L465.50 324.60" stroke="#e01818" stroke-width="0.7" />
<path d="M496.50 241.00L496.50 324.60" stroke="#e01818" stroke-width="0.7" />
<path d="M521.50 241.00L521.50 324.60" stroke="#e01818" stroke-width="0.7" />
<path d="M542.50 241.00L542.50 324.60" stroke="#e01818" stroke-width="0.7" />
<path d="M552.50 241.00L552.50 298.60" stroke="#e01818" stroke-width="0.7" />
<text transform="translate(551.00 271.00) rotate(-90)" font-size="4.2" text-anchor="middle" font-weight="bold" font-style="italic" fill="#222">5175</text>
<path d="M448.50 221.60L448.50 307.60" stroke="#1c1c20" stroke-width="0.65" />
<path d="M453.50 221.60L453.50 307.60" stroke="#1c1c20" stroke-width="0.65" />
<text transform="translate(447.20 271.00) rotate(-90)" font-size="4.2" text-anchor="middle" font-weight="bold" font-style="italic" fill="#222">8360</text>
<text transform="translate(453.00 232.60) rotate(-90)" font-size="4.2" text-anchor="middle" font-weight="bold" font-style="italic" fill="#222">2160</text>
<text transform="translate(453.00 246.60) rotate(-90)" font-size="4.2" text-anchor="middle" font-weight="bold" font-style="italic" fill="#222">875</text>
<text transform="translate(453.00 276.00) rotate(-90)" font-size="4.2" text-anchor="middle" font-weight="bold" font-style="italic" fill="#222">5300</text>
<text transform="translate(453.00 302.00) rotate(-90)" font-size="4.2" text-anchor="middle" font-weight="bold" font-style="italic" fill="#222">1000</text>
<path d="M447.10 223.80L448.90 222.00" stroke="#1c1c20" stroke-width="0.65" />
<path d="M452.90 223.80L454.70 222.00" stroke="#1c1c20" stroke-width="0.65" />
<path d="M447.10 243.20L448.90 241.40" stroke="#1c1c20" stroke-width="0.65" />
<path d="M452.90 243.20L454.70 241.40" stroke="#1c1c20" stroke-width="0.65" />
<path d="M447.10 251.50L448.90 249.70" stroke="#1c1c20" stroke-width="0.65" />
<path d="M452.90 251.50L454.70 249.70" stroke="#1c1c20" stroke-width="0.65" />
<path d="M447.10 298.40L448.90 296.60" stroke="#1c1c20" stroke-width="0.65" />
<path d="M452.90 298.40L454.70 296.60" stroke="#1c1c20" stroke-width="0.65" />
<path d="M447.10 307.20L448.90 305.40" stroke="#1c1c20" stroke-width="0.65" />
<path d="M452.90 307.20L454.70 305.40" stroke="#1c1c20" stroke-width="0.65" />
<path d="M464.40 315.50L544.00 315.50" stroke="#1c1c20" stroke-width="0.65" />
<path d="M464.40 321.50L544.00 321.50" stroke="#1c1c20" stroke-width="0.65" />
<text x="481.25" y="314.50" font-size="4.3" text-anchor="middle" font-weight="bold" fill="#222" font-style="italic">3600</text>
<text x="509.10" y="314.50" font-size="4.3" text-anchor="middle" font-weight="bold" fill="#222" font-style="italic">2700</text>
<text x="532.00" y="314.50" font-size="4.3" text-anchor="middle" font-weight="bold" fill="#222" font-style="italic">2400</text>
<text x="504.15" y="320.80" font-size="4.3" text-anchor="middle" font-weight="bold" fill="#222" font-style="italic">8700</text>
<path d="M464.70 316.10L466.50 314.30" stroke="#1c1c20" stroke-width="0.65" />
<path d="M496.00 316.10L497.80 314.30" stroke="#1c1c20" stroke-width="0.65" />
<path d="M520.40 316.10L522.20 314.30" stroke="#1c1c20" stroke-width="0.65" />
<path d="M541.80 316.10L543.60 314.30" stroke="#1c1c20" stroke-width="0.65" />
<path d="M497.00 224.50L530.00 224.50" stroke="#1c1c20" stroke-width="0.55" />
<path d="M497.00 226.50L530.00 226.50" stroke="#1c1c20" stroke-width="0.55" />
<path d="M497.00 229.50L530.00 229.50" stroke="#1c1c20" stroke-width="0.55" />
<path d="M497.00 231.50L530.00 231.50" stroke="#1c1c20" stroke-width="0.55" />
<path d="M497.00 234.50L530.00 234.50" stroke="#1c1c20" stroke-width="0.55" />
<path d="M530.50 222.90L530.50 242.00" stroke="#1c1c20" stroke-width="0.65" />
<path d="M497.00 222.50L530.00 222.50" stroke="#1c1c20" stroke-width="0.65" />
<path d="M511.50 217.00L511.50 298.00" stroke="#1c1c20" stroke-width="0.8" />
<path d="M514.50 221.00L514.50 246.00" stroke="#1c1c20" stroke-width="0.65" />
<path d="M465.60 250.60L465.60 222.90L496.90 222.90L496.90 235.00" stroke="#7a1410" stroke-width="1.3" fill="none" />
<path d="M465.60 250.60L486.00 250.60" stroke="#7a1410" stroke-width="1.3" />
<path d="M465.60 250.60L465.60 297.50L473.00 306.30L489.00 306.30L497.00 297.50" stroke="#7a1410" stroke-width="1.3" fill="none" />
<path d="M497.00 242.30L521.30 242.30" stroke="#7a1410" stroke-width="1.2" fill="none" />
<path d="M527.00 242.30L543.00 242.30L543.00 297.50L535.00 297.50" stroke="#7a1410" stroke-width="1.3" fill="none" />
<path d="M497.00 297.50L521.30 297.50" stroke="#7a1410" stroke-width="1.1" />
<path d="M496.50 242.30L496.50 268.00" stroke="#7a1410" stroke-width="1.2" />
<path d="M496.50 283.00L496.50 297.50" stroke="#7a1410" stroke-width="1.2" />
<path d="M521.50 250.00L521.50 297.50" stroke="#7a1410" stroke-width="1.1" />
<path d="M465.60 263.50L545.00 263.50" stroke="#1c1c20" stroke-width="0.6" />
<path d="M461.00 263.50L465.60 263.50" stroke="#1c1c20" stroke-width="0.6" />
<path d="M484.50 218.00L484.50 252.00" stroke="#1c1c20" stroke-width="0.65" />
<path d="M483.50 282.00L483.50 296.00" stroke="#1c1c20" stroke-width="0.65" />
<path d="M497.00 250.50L521.30 250.50" stroke="#1c1c20" stroke-width="0.8" />
<path d="M497.00 283.50L521.30 283.50" stroke="#1c1c20" stroke-width="0.8" />
<path d="M458.00 231.50L530.00 231.50" stroke="#1c1c20" stroke-width="0.5" />
<path d="M521.30 263.50L543.00 263.50" stroke="#1c1c20" stroke-width="0.7" />
<path d="M533.50 250.00L533.50 262.00" stroke="#1c1c20" stroke-width="0.6" />
<path d="M467.00 297.50L474.00 305.00L488.00 305.00L495.60 297.50" stroke="#1c1c20" stroke-width="0.65" fill="none" />
<path d="M467.60 295.00L475.00 303.40L487.00 303.40L494.60 295.00" stroke="#1c1c20" stroke-width="0.55" fill="none" />
<path d="M468.00 293.00L474.00 287.00L481.00 296.00L476.00 301.00" stroke="#1c1c20" stroke-width="0.55" fill="none" />
<path d="M474.00 287.00L482.00 300.00" stroke="#1c1c20" stroke-width="0.55" fill="none" />
<path d="M487.00 250.60L493.00 246.60L496.00 250.00" stroke="#1c1c20" stroke-width="0.65" fill="none" />
<path d="M497.00 236.00L502.00 232.00L504.00 240.00" stroke="#1c1c20" stroke-width="0.65" fill="none" />
<path d="M499.00 268.00L505.00 272.00L500.00 276.00" stroke="#1c1c20" stroke-width="0.65" fill="none" />
<path d="M499.00 283.00L506.00 287.00L500.00 291.00" stroke="#1c1c20" stroke-width="0.65" fill="none" />
<path d="M500.00 297.50L506.00 302.00L509.00 297.50" stroke="#1c1c20" stroke-width="0.65" fill="none" />
<path d="M523.00 244.00L528.00 240.00L530.00 246.00" stroke="#1c1c20" stroke-width="0.65" fill="none" />
<rect x="536.40" y="268.00" width="5.00" height="9.00" fill="none" stroke="#1c1c20" stroke-width="0.65" />
<rect x="535.00" y="279.00" width="6.60" height="14.00" fill="none" stroke="#1c1c20" stroke-width="0.65" />
<rect x="526.40" y="282.60" width="6.00" height="10.00" fill="none" stroke="#1c1c20" stroke-width="0.65" />
<rect x="527.60" y="285.00" width="1.60" height="1.60" fill="#1c1c20" stroke="none" stroke-width="0.5" />
<rect x="527.60" y="289.00" width="1.60" height="1.60" fill="#1c1c20" stroke="none" stroke-width="0.5" />
<rect x="526.00" y="300.40" width="9.00" height="3.40" fill="none" stroke="#1c1c20" stroke-width="0.6" />
<rect x="536.00" y="299.40" width="6.60" height="6.00" fill="none" stroke="#1c1c20" stroke-width="0.55" />
<rect x="514.00" y="257.60" width="4.00" height="4.60" fill="none" stroke="#1c1c20" stroke-width="0.65" />
<circle cx="516" cy="261" r="1.7" fill="none" stroke="#1c1c20" stroke-width="0.4"/>
<circle cx="487.6" cy="288.4" r="1" fill="none" stroke="#1c1c20" stroke-width="0.4"/>
<path d="M487.60 288.40L495.00 288.40L495.00 294.00" stroke="#1c1c20" stroke-width="0.4" fill="none" />
<text x="478.00" y="228.60" font-size="3.3" text-anchor="start" font-weight="bold" fill="#000" font-style="italic" stroke="#000" stroke-width="0.32">11.60</text>
<text x="489.00" y="228.60" font-size="3.3" text-anchor="start" font-weight="bold" fill="#000" font-style="italic" stroke="#000" stroke-width="0.32">16.10</text>
<text x="474.00" y="236.60" font-size="3.3" text-anchor="start" font-weight="bold" fill="#000" font-style="italic" stroke="#000" stroke-width="0.32">Терраса</text>
<text x="483.00" y="243.60" font-size="3.3" text-anchor="start" font-weight="bold" fill="#000" font-style="italic" stroke="#000" stroke-width="0.32">2.160</text>
<text x="473.00" y="279.60" font-size="3.3" text-anchor="start" font-weight="bold" fill="#000" font-style="italic" stroke="#000" stroke-width="0.32">Гостиная</text>
<text x="481.00" y="262.60" font-size="3.3" text-anchor="start" font-weight="bold" fill="#000" font-style="italic" stroke="#000" stroke-width="0.32">3500</text>
<text x="488.00" y="267.60" font-size="3.3" text-anchor="start" font-weight="bold" fill="#000" font-style="italic" stroke="#000" stroke-width="0.32">20.50</text>
<text x="499.00" y="253.00" font-size="3.3" text-anchor="start" font-weight="bold" fill="#000" font-style="italic" stroke="#000" stroke-width="0.32">Тамбур</text>
<text x="505.00" y="263.00" font-size="3.3" text-anchor="start" font-weight="bold" fill="#000" font-style="italic" stroke="#000" stroke-width="0.32">2700</text>
<text x="500.00" y="249.00" font-size="3.3" text-anchor="start" font-weight="bold" fill="#000" font-style="italic" stroke="#000" stroke-width="0.32">2.30</text>
<text x="522.00" y="249.40" font-size="3.3" text-anchor="start" font-weight="bold" fill="#000" font-style="italic" stroke="#000" stroke-width="0.32">Котельная</text>
<text x="526.00" y="271.60" font-size="3.3" text-anchor="start" font-weight="bold" fill="#000" font-style="italic" stroke="#000" stroke-width="0.32">Кухня</text>
<text x="499.00" y="295.00" font-size="3.3" text-anchor="start" font-weight="bold" fill="#000" font-style="italic" stroke="#000" stroke-width="0.32">Гардероб</text>
<text x="490.00" y="296.00" font-size="3.3" text-anchor="start" font-weight="bold" fill="#000" font-style="italic" stroke="#000" stroke-width="0.32">1.50</text>
<text x="519.00" y="231.60" font-size="3.3" text-anchor="start" font-weight="bold" fill="#000" font-style="italic" stroke="#000" stroke-width="0.32">12.30</text>
<text x="515.00" y="236.60" font-size="3.3" text-anchor="start" font-weight="bold" fill="#000" font-style="italic" stroke="#000" stroke-width="0.32">3.40</text>
<text x="525.00" y="303.60" font-size="3.3" text-anchor="start" font-weight="bold" fill="#000" font-style="italic" stroke="#000" stroke-width="0.32">2.60</text>
<text x="514.00" y="266.60" font-size="3.3" text-anchor="start" font-weight="bold" fill="#000" font-style="italic" stroke="#000" stroke-width="0.32">4.10</text>
<text x="491.00" y="247.00" font-size="3.3" text-anchor="start" font-weight="bold" fill="#000" font-style="italic" stroke="#000" stroke-width="0.32">0.9</text>
<text transform="translate(483.60 285.00) rotate(-90)" font-size="2.6" text-anchor="middle" font-weight="bold" font-style="italic" fill="#222">3500</text>
<text transform="translate(509.20 280.00) rotate(-90)" font-size="2.6" text-anchor="middle" font-weight="bold" font-style="italic" fill="#222">4100</text>
<text transform="translate(533.40 256.00) rotate(-90)" font-size="2.6" text-anchor="middle" font-weight="bold" font-style="italic" fill="#222">1800</text>
<text transform="translate(514.40 232.00) rotate(-90)" font-size="2.6" text-anchor="middle" font-weight="bold" font-style="italic" fill="#222">2160</text>
<text transform="translate(460.00 232.00) rotate(-90)" font-size="2.6" text-anchor="middle" font-weight="bold" font-style="italic" fill="#222">11.60</text>
<rect x="485.50" y="227.30" width="8.00" height="3.00" fill="#fff" stroke="#1c1c20" stroke-width="0.5" rx="0.8"/>
<rect x="486.70" y="228.10" width="5.60" height="1.40" fill="#1c1c20" stroke="none" stroke-width="0.5" />
<rect x="515.30" y="234.50" width="7.60" height="3.00" fill="#fff" stroke="#1c1c20" stroke-width="0.5" rx="0.8"/>
<rect x="516.50" y="235.30" width="5.20" height="1.40" fill="#1c1c20" stroke="none" stroke-width="0.5" />
<rect x="485.50" y="266.00" width="8.00" height="3.00" fill="#fff" stroke="#1c1c20" stroke-width="0.5" rx="0.8"/>
<rect x="486.70" y="266.80" width="5.60" height="1.40" fill="#1c1c20" stroke="none" stroke-width="0.5" />
<rect x="523.00" y="302.30" width="7.20" height="3.00" fill="#fff" stroke="#1c1c20" stroke-width="0.5" rx="0.8"/>
<rect x="524.20" y="303.10" width="4.80" height="1.40" fill="#1c1c20" stroke="none" stroke-width="0.5" />
<path d="M464.50 272.00L464.50 281.00" stroke="#1c1c20" stroke-width="1.6" />
<path d="M543.20 262.00L543.20 270.00" stroke="#1c1c20" stroke-width="1.4" />
<path d="M470.00 223.00L480.00 223.00" stroke="#1c1c20" stroke-width="1.5" />
<path d="M511.50 244.00L511.50 262.00" stroke="#1c1c20" stroke-width="1.2" />
<path d="M511.50 268.00L511.50 296.00" stroke="#1c1c20" stroke-width="1.1" />
<path d="M497.40 256.50L521.00 256.50" stroke="#1c1c20" stroke-width="0.9" />
<path d="M500.00 270.50L520.00 270.50" stroke="#1c1c20" stroke-width="0.7" />
<path d="M521.40 276.50L543.00 276.50" stroke="#1c1c20" stroke-width="0.8" />
<path d="M533.50 264.00L533.50 297.00" stroke="#1c1c20" stroke-width="0.6" />
<path d="M483.20 219.60L484.80 218.00" stroke="#1c1c20" stroke-width="0.65" />
<path d="M508.80 219.60L510.40 218.00" stroke="#1c1c20" stroke-width="0.65" />
<circle cx="439.60" cy="222.90" r="4.0" fill="#fff" stroke="#111" stroke-width="0.9"/>
<text x="439.60" y="224.60" font-size="4.8" text-anchor="middle" font-weight="bold" fill="#111" stroke="#111" stroke-width="0.25">Д</text>
<circle cx="439.60" cy="242.30" r="4.0" fill="#fff" stroke="#111" stroke-width="0.9"/>
<text x="439.60" y="244.00" font-size="4.8" text-anchor="middle" font-weight="bold" fill="#111" stroke="#111" stroke-width="0.25">Г</text>
<circle cx="439.60" cy="250.60" r="4.0" fill="#fff" stroke="#111" stroke-width="0.9"/>
<text x="439.60" y="252.30" font-size="4.8" text-anchor="middle" font-weight="bold" fill="#111" stroke="#111" stroke-width="0.25">В</text>
<circle cx="439.60" cy="297.50" r="4.0" fill="#fff" stroke="#111" stroke-width="0.9"/>
<text x="439.60" y="299.20" font-size="4.8" text-anchor="middle" font-weight="bold" fill="#111" stroke="#111" stroke-width="0.25">Б</text>
<circle cx="439.60" cy="306.30" r="4.0" fill="#fff" stroke="#111" stroke-width="0.9"/>
<text x="439.60" y="308.00" font-size="4.8" text-anchor="middle" font-weight="bold" fill="#111" stroke="#111" stroke-width="0.25">А</text>
<circle cx="465.60" cy="329.80" r="4.0" fill="#fff" stroke="#111" stroke-width="0.9"/>
<text x="465.60" y="331.50" font-size="4.8" text-anchor="middle" font-weight="bold" fill="#111" stroke="#111" stroke-width="0.25">1</text>
<circle cx="496.90" cy="329.80" r="4.0" fill="#fff" stroke="#111" stroke-width="0.9"/>
<text x="496.90" y="331.50" font-size="4.8" text-anchor="middle" font-weight="bold" fill="#111" stroke="#111" stroke-width="0.25">2</text>
<circle cx="521.30" cy="329.80" r="4.0" fill="#fff" stroke="#111" stroke-width="0.9"/>
<text x="521.30" y="331.50" font-size="4.8" text-anchor="middle" font-weight="bold" fill="#111" stroke="#111" stroke-width="0.25">3</text>
<circle cx="542.70" cy="329.80" r="4.0" fill="#fff" stroke="#111" stroke-width="0.9"/>
<text x="542.70" y="331.50" font-size="4.8" text-anchor="middle" font-weight="bold" fill="#111" stroke="#111" stroke-width="0.25">4</text>
<path d="M612.60 223.50L634.00 223.50" stroke="#e01818" stroke-width="0.7" />
<path d="M612.60 242.50L690.40 242.50" stroke="#e01818" stroke-width="0.7" />
<path d="M612.60 297.50L634.00 297.50" stroke="#e01818" stroke-width="0.7" />
<path d="M612.60 306.50L634.00 306.50" stroke="#e01818" stroke-width="0.7" />
<path d="M633.50 222.60L633.50 324.60" stroke="#e01818" stroke-width="0.7" />
<path d="M665.50 241.00L665.50 324.60" stroke="#e01818" stroke-width="0.7" />
<path d="M689.50 241.00L689.50 324.60" stroke="#e01818" stroke-width="0.7" />
<path d="M710.50 296.00L710.50 324.60" stroke="#e01818" stroke-width="0.7" />
<path d="M615.50 222.20L615.50 308.20" stroke="#1c1c20" stroke-width="0.65" />
<path d="M622.50 222.20L622.50 308.20" stroke="#1c1c20" stroke-width="0.65" />
<text transform="translate(615.00 271.00) rotate(-90)" font-size="4.2" text-anchor="middle" font-weight="bold" font-style="italic" fill="#222">8360</text>
<text transform="translate(621.20 232.60) rotate(-90)" font-size="4.2" text-anchor="middle" font-weight="bold" font-style="italic" fill="#222">2160</text>
<text transform="translate(621.20 271.00) rotate(-90)" font-size="4.2" text-anchor="middle" font-weight="bold" font-style="italic" fill="#222">6175</text>
<text transform="translate(621.20 302.40) rotate(-90)" font-size="4.2" text-anchor="middle" font-weight="bold" font-style="italic" fill="#222">1000</text>
<path d="M614.90 224.40L616.70 222.60" stroke="#1c1c20" stroke-width="0.65" />
<path d="M621.10 224.40L622.90 222.60" stroke="#1c1c20" stroke-width="0.65" />
<path d="M614.90 243.20L616.70 241.40" stroke="#1c1c20" stroke-width="0.65" />
<path d="M621.10 243.20L622.90 241.40" stroke="#1c1c20" stroke-width="0.65" />
<path d="M614.90 298.40L616.70 296.60" stroke="#1c1c20" stroke-width="0.65" />
<path d="M621.10 298.40L622.90 296.60" stroke="#1c1c20" stroke-width="0.65" />
<path d="M614.90 307.80L616.70 306.00" stroke="#1c1c20" stroke-width="0.65" />
<path d="M621.10 307.80L622.90 306.00" stroke="#1c1c20" stroke-width="0.65" />
<path d="M632.40 315.50L712.00 315.50" stroke="#1c1c20" stroke-width="0.65" />
<path d="M632.40 321.50L712.00 321.50" stroke="#1c1c20" stroke-width="0.65" />
<text x="649.45" y="314.50" font-size="4.3" text-anchor="middle" font-weight="bold" fill="#222" font-style="italic">3600</text>
<text x="677.60" y="314.50" font-size="4.3" text-anchor="middle" font-weight="bold" fill="#222" font-style="italic">2700</text>
<text x="700.20" y="314.50" font-size="4.3" text-anchor="middle" font-weight="bold" fill="#222" font-style="italic">2400</text>
<text x="672.05" y="320.80" font-size="4.3" text-anchor="middle" font-weight="bold" fill="#222" font-style="italic">8700</text>
<path d="M632.60 316.10L634.40 314.30" stroke="#1c1c20" stroke-width="0.65" />
<path d="M664.50 316.10L666.30 314.30" stroke="#1c1c20" stroke-width="0.65" />
<path d="M688.90 316.10L690.70 314.30" stroke="#1c1c20" stroke-width="0.65" />
<path d="M709.70 316.10L711.50 314.30" stroke="#1c1c20" stroke-width="0.65" />
<path d="M666.00 224.50L699.00 224.50" stroke="#1c1c20" stroke-width="0.55" />
<path d="M666.00 227.50L699.00 227.50" stroke="#1c1c20" stroke-width="0.55" />
<path d="M666.00 229.50L699.00 229.50" stroke="#1c1c20" stroke-width="0.55" />
<path d="M666.00 223.20L699.00 223.20L699.00 240.00" stroke="#1c1c20" stroke-width="0.65" fill="none" />
<rect x="690.80" y="239.20" width="24.00" height="60.40" fill="#fff" stroke="#1c1c20" stroke-width="0.65" />
<rect x="691.40" y="242.20" width="20.20" height="56.00" fill="none" stroke="#1c1c20" stroke-width="0.55" />
<path d="M691.40 243.50L711.60 243.50" stroke="#1c1c20" stroke-width="0.55" />
<path d="M691.40 247.50L711.60 247.50" stroke="#1c1c20" stroke-width="0.55" />
<path d="M691.40 252.50L711.60 252.50" stroke="#1c1c20" stroke-width="0.55" />
<path d="M691.40 257.50L711.60 257.50" stroke="#1c1c20" stroke-width="0.55" />
<path d="M691.40 261.50L711.60 261.50" stroke="#1c1c20" stroke-width="0.55" />
<path d="M691.40 266.50L711.60 266.50" stroke="#1c1c20" stroke-width="0.55" />
<path d="M691.40 270.50L711.60 270.50" stroke="#1c1c20" stroke-width="0.55" />
<path d="M691.40 275.50L711.60 275.50" stroke="#1c1c20" stroke-width="0.55" />
<path d="M691.40 280.50L711.60 280.50" stroke="#1c1c20" stroke-width="0.55" />
<path d="M691.40 284.50L711.60 284.50" stroke="#1c1c20" stroke-width="0.55" />
<path d="M691.40 289.50L711.60 289.50" stroke="#1c1c20" stroke-width="0.55" />
<path d="M691.40 293.50L711.60 293.50" stroke="#1c1c20" stroke-width="0.55" />
<text x="699.00" y="266.60" font-size="2.6" text-anchor="start" font-weight="bold" fill="#111" >25.5</text>
<path d="M710.50 299.60L710.50 306.00" stroke="#1c1c20" stroke-width="0.65" />
<path d="M712.50 299.60L712.50 306.00" stroke="#1c1c20" stroke-width="0.65" />
<path d="M690.00 300.50L714.80 300.50" stroke="#1c1c20" stroke-width="0.65" />
<path d="M633.50 242.30L633.50 223.50L665.40 223.50L665.40 242.30" stroke="#1c1c20" stroke-width="1.3" fill="none" />
<path d="M633.50 223.50L665.40 223.50" stroke="#7a1410" stroke-width="0.7" />
<path d="M649.50 218.60L649.50 242.00" stroke="#1c1c20" stroke-width="0.65" />
<path d="M633.50 242.30L633.50 297.50L641.00 306.90L657.00 306.90L665.40 297.50" stroke="#1c1c20" stroke-width="1.1" fill="none" />
<path d="M634.40 242.30L655.00 242.30" stroke="#7a1410" stroke-width="1.2" fill="none" />
<path d="M661.00 242.30L690.00 242.30L690.00 299.60" stroke="#7a1410" stroke-width="1.1" fill="none" />
<path d="M665.50 242.30L665.50 297.50" stroke="#7a1410" stroke-width="1.1" />
<path d="M665.40 299.60L690.00 299.60" stroke="#1c1c20" stroke-width="0.9" fill="none" />
<path d="M690.50 299.60L690.50 306.00" stroke="#1c1c20" stroke-width="0.7" />
<path d="M630.00 268.50L692.00 268.50" stroke="#1c1c20" stroke-width="0.6" />
<path d="M649.50 242.30L649.50 310.00" stroke="#1c1c20" stroke-width="0.55" />
<path d="M633.50 277.50L656.00 277.50" stroke="#1c1c20" stroke-width="0.65" />
<path d="M633.50 287.50L656.00 287.50" stroke="#1c1c20" stroke-width="0.65" />
<path d="M635.00 282.50L655.00 282.50" stroke="#1c1c20" stroke-width="0.55" />
<path d="M638.00 280.60L637.00 284.40" stroke="#1c1c20" stroke-width="0.4" />
<path d="M641.00 280.60L640.00 284.40" stroke="#1c1c20" stroke-width="0.4" />
<path d="M644.00 280.60L643.00 284.40" stroke="#1c1c20" stroke-width="0.4" />
<path d="M647.00 280.60L646.00 284.40" stroke="#1c1c20" stroke-width="0.4" />
<path d="M651.00 280.60L650.00 284.40" stroke="#1c1c20" stroke-width="0.4" />
<path d="M656.00 277.40L660.00 273.00L663.00 277.00" stroke="#1c1c20" stroke-width="0.65" fill="none" />
<path d="M656.00 277.40L656.00 290.00" stroke="#1c1c20" stroke-width="0.65" fill="none" />
<path d="M656.00 290.50L665.40 290.50" stroke="#1c1c20" stroke-width="0.65" />
<path d="M635.00 297.50L642.00 305.60L656.00 305.60L663.60 297.50" stroke="#1c1c20" stroke-width="0.65" fill="none" />
<path d="M636.00 293.60L644.00 302.60L654.00 302.60L662.00 293.60" stroke="#1c1c20" stroke-width="0.55" fill="none" />
<path d="M638.00 291.00L645.60 299.60L652.60 299.60L660.00 291.00" stroke="#1c1c20" stroke-width="0.55" fill="none" />
<path d="M645.60 299.60L642.00 305.60" stroke="#1c1c20" stroke-width="0.55" />
<path d="M652.60 299.60L656.00 305.60" stroke="#1c1c20" stroke-width="0.55" />
<path d="M638.00 291.00L635.00 297.50" stroke="#1c1c20" stroke-width="0.4" />
<path d="M660.00 291.00L663.60 297.50" stroke="#1c1c20" stroke-width="0.4" />
<path d="M646.50 296.00L646.50 306.00" stroke="#1c1c20" stroke-width="0.55" />
<path d="M652.50 296.00L652.50 306.00" stroke="#1c1c20" stroke-width="0.55" />
<path d="M665.40 251.50L690.00 251.50" stroke="#1c1c20" stroke-width="0.6" />
<path d="M679.50 242.30L679.50 251.60" stroke="#1c1c20" stroke-width="0.65" />
<path d="M679.50 220.00L679.50 246.00" stroke="#1c1c20" stroke-width="0.55" />
<rect x="670.00" y="248.60" width="12.00" height="2.40" fill="#1c1c20" stroke="none" stroke-width="0.5" />
<rect x="668.00" y="256.00" width="9.00" height="4.00" fill="none" stroke="#1c1c20" stroke-width="0.65" />
<rect x="684.00" y="252.60" width="4.60" height="6.00" fill="none" stroke="#1c1c20" stroke-width="0.55" />
<path d="M665.40 260.50L676.00 260.50" stroke="#1c1c20" stroke-width="0.65" />
<path d="M658.00 242.30L661.00 246.60L664.00 243.00" stroke="#1c1c20" stroke-width="0.65" fill="none" />
<path d="M661.00 254.00L667.00 250.00L668.60 258.00" stroke="#1c1c20" stroke-width="0.65" fill="none" />
<path d="M666.40 262.00L672.00 266.00L667.00 268.40" stroke="#1c1c20" stroke-width="0.65" fill="none" />
<path d="M667.00 281.00L671.00 285.00L667.40 289.00" stroke="#1c1c20" stroke-width="0.65" fill="none" />
<path d="M672.00 297.00L676.00 292.00L679.60 297.00" stroke="#1c1c20" stroke-width="0.65" fill="none" />
<path d="M679.50 296.00L679.50 310.00" stroke="#1c1c20" stroke-width="0.65" />
<text x="641.00" y="256.00" font-size="3.3" text-anchor="start" font-weight="bold" fill="#000" font-style="italic" stroke="#000" stroke-width="0.32">Спальня</text>
<text x="669.00" y="273.00" font-size="3.3" text-anchor="start" font-weight="bold" fill="#000" font-style="italic" stroke="#000" stroke-width="0.32">Спальня</text>
<text x="643.00" y="268.00" font-size="3.3" text-anchor="start" font-weight="bold" fill="#000" font-style="italic" stroke="#000" stroke-width="0.32">3.600</text>
<text x="658.00" y="268.00" font-size="3.3" text-anchor="start" font-weight="bold" fill="#000" font-style="italic" stroke="#000" stroke-width="0.32">2.60</text>
<text x="671.00" y="268.00" font-size="3.3" text-anchor="start" font-weight="bold" fill="#000" font-style="italic" stroke="#000" stroke-width="0.32">2700</text>
<text x="683.00" y="268.00" font-size="3.3" text-anchor="start" font-weight="bold" fill="#000" font-style="italic" stroke="#000" stroke-width="0.32">2.40</text>
<text x="672.00" y="246.00" font-size="3.3" text-anchor="start" font-weight="bold" fill="#000" font-style="italic" stroke="#000" stroke-width="0.32">С/У</text>
<text x="659.00" y="239.60" font-size="3.3" text-anchor="start" font-weight="bold" fill="#000" font-style="italic" stroke="#000" stroke-width="0.32">0.9</text>
<text x="682.00" y="292.00" font-size="3.3" text-anchor="start" font-weight="bold" fill="#000" font-style="italic" stroke="#000" stroke-width="0.32">11.8</text>
<text x="627.00" y="267.60" font-size="3.3" text-anchor="start" font-weight="bold" fill="#000" font-style="italic" stroke="#000" stroke-width="0.32">6.40</text>
<text x="658.00" y="275.00" font-size="3.3" text-anchor="start" font-weight="bold" fill="#000" font-style="italic" stroke="#000" stroke-width="0.32">1.7</text>
<text x="683.00" y="256.00" font-size="3.3" text-anchor="start" font-weight="bold" fill="#000" font-style="italic" stroke="#000" stroke-width="0.32">Гард.</text>
<text transform="translate(649.00 232.00) rotate(-90)" font-size="2.6" text-anchor="middle" font-weight="bold" font-style="italic" fill="#222">2160</text>
<text transform="translate(649.00 259.00) rotate(-90)" font-size="2.6" text-anchor="middle" font-weight="bold" font-style="italic" fill="#222">3500</text>
<text transform="translate(649.00 284.00) rotate(-90)" font-size="2.6" text-anchor="middle" font-weight="bold" font-style="italic" fill="#222">3500</text>
<text transform="translate(679.40 283.00) rotate(-90)" font-size="2.6" text-anchor="middle" font-weight="bold" font-style="italic" fill="#222">4100</text>
<text transform="translate(679.40 236.00) rotate(-90)" font-size="2.6" text-anchor="middle" font-weight="bold" font-style="italic" fill="#222">1800</text>
<path d="M648.60 220.00L650.20 218.40" stroke="#1c1c20" stroke-width="0.65" />
<circle cx="609.20" cy="223.50" r="4.0" fill="#fff" stroke="#111" stroke-width="0.9"/>
<text x="609.20" y="225.20" font-size="4.8" text-anchor="middle" font-weight="bold" fill="#111" stroke="#111" stroke-width="0.25">Д</text>
<circle cx="609.20" cy="242.30" r="4.0" fill="#fff" stroke="#111" stroke-width="0.9"/>
<text x="609.20" y="244.00" font-size="4.8" text-anchor="middle" font-weight="bold" fill="#111" stroke="#111" stroke-width="0.25">Г</text>
<circle cx="609.20" cy="297.50" r="4.0" fill="#fff" stroke="#111" stroke-width="0.9"/>
<text x="609.20" y="299.20" font-size="4.8" text-anchor="middle" font-weight="bold" fill="#111" stroke="#111" stroke-width="0.25">Б</text>
<circle cx="609.20" cy="306.90" r="4.0" fill="#fff" stroke="#111" stroke-width="0.9"/>
<text x="609.20" y="308.60" font-size="4.8" text-anchor="middle" font-weight="bold" fill="#111" stroke="#111" stroke-width="0.25">А</text>
<circle cx="633.50" cy="329.80" r="4.0" fill="#fff" stroke="#111" stroke-width="0.9"/>
<text x="633.50" y="331.50" font-size="4.8" text-anchor="middle" font-weight="bold" fill="#111" stroke="#111" stroke-width="0.25">1</text>
<circle cx="665.40" cy="329.80" r="4.0" fill="#fff" stroke="#111" stroke-width="0.9"/>
<text x="665.40" y="331.50" font-size="4.8" text-anchor="middle" font-weight="bold" fill="#111" stroke="#111" stroke-width="0.25">2</text>
<circle cx="689.80" cy="329.80" r="4.0" fill="#fff" stroke="#111" stroke-width="0.9"/>
<text x="689.80" y="331.50" font-size="4.8" text-anchor="middle" font-weight="bold" fill="#111" stroke="#111" stroke-width="0.25">3</text>
<circle cx="710.60" cy="329.80" r="4.0" fill="#fff" stroke="#111" stroke-width="0.9"/>
<text x="710.60" y="331.50" font-size="4.8" text-anchor="middle" font-weight="bold" fill="#111" stroke="#111" stroke-width="0.25">4</text></svg>
</div></body></html>
